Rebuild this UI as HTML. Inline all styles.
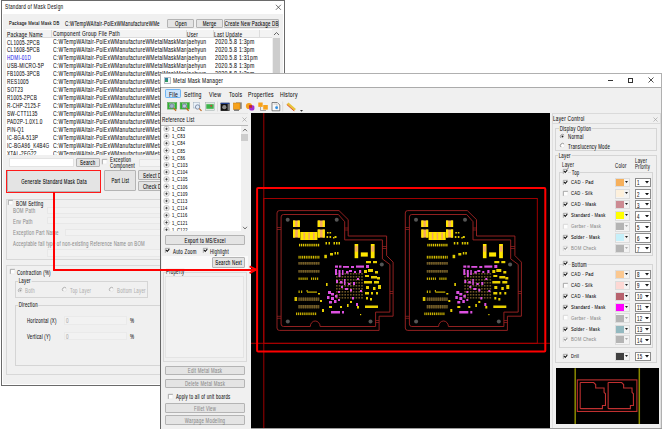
<!DOCTYPE html><html><head><meta charset="utf-8"><style>
html,body{margin:0;padding:0;}
body{width:662px;height:429px;overflow:hidden;position:relative;background:#fff;font-family:"Liberation Sans",sans-serif;}
.t{position:absolute;white-space:nowrap;line-height:1.117;-webkit-text-stroke:0.07px currentColor;}
.r{position:absolute;}
</style></head><body>
<div class="r" style="left:1px;top:0px;width:284px;height:386px;background:#fff;border:1px solid #6a6a6a;box-sizing:border-box;"></div>
<div class="r" style="left:3px;top:14px;width:280px;height:370px;background:#f0f0f0;"></div>
<div class="t" style="left:5.1px;top:3.42px;font-size:6.86px;color:#1a1a1a;letter-spacing:0.35px;transform:scaleX(0.686);transform-origin:0 0;">Standard of Mask Design</div>
<svg class="r" style="left:274px;top:2.5px" width="9" height="9" viewBox="0 0 9 9"><path d="M1.9 1.8 L6.9 6.8 M6.9 1.8 L1.9 6.8" stroke="#333" stroke-width="0.7"/></svg>
<div class="t" style="left:8.5px;top:20.20px;font-size:5.87px;color:#000;letter-spacing:0.3px;transform:scaleX(0.717);transform-origin:0 0;">Package Metal Mask DB</div>
<div class="t" style="left:64.5px;top:19.85px;font-size:6.47px;color:#000;letter-spacing:0.35px;transform:scaleX(0.690);transform-origin:0 0;">C:WTempWAltair-PolExWManufactureWMe</div>
<div class="r" style="left:166.5px;top:19.3px;width:27.900000000000006px;height:8.399999999999999px;background:#e4e4e4;border:1px solid #b4b4b4;border-radius:1px;box-sizing:border-box;"></div>
<div class="t" style="left:166.5px;top:20.39px;font-size:6.40px;color:#000;letter-spacing:0.35px;transform:scaleX(0.695);transform-origin:0 0;width:40.12px;text-align:center;">Open</div>
<div class="r" style="left:196px;top:19.3px;width:27px;height:8.399999999999999px;background:#e4e4e4;border:1px solid #b4b4b4;border-radius:1px;box-sizing:border-box;"></div>
<div class="t" style="left:196px;top:20.39px;font-size:6.40px;color:#000;letter-spacing:0.35px;transform:scaleX(0.691);transform-origin:0 0;width:39.08px;text-align:center;">Merge</div>
<div class="r" style="left:224px;top:19.3px;width:55.39999999999998px;height:8.399999999999999px;background:#e4e4e4;border:1px solid #b4b4b4;border-radius:1px;box-sizing:border-box;"></div>
<div class="t" style="left:224px;top:20.39px;font-size:6.40px;color:#000;letter-spacing:0.35px;transform:scaleX(0.687);transform-origin:0 0;width:80.68px;text-align:center;">Create New Package DB</div>
<div class="r" style="left:6px;top:29px;width:266px;height:126px;background:#fff;"></div>
<div class="r" style="left:6px;top:29.5px;width:266px;height:8.3px;background:#f3f3f3;border-bottom:1px solid #dcdcdc;box-sizing:border-box;"></div>
<div class="r" style="left:51px;top:30px;width:0.8px;height:7.5px;background:#dcdcdc;"></div>
<div class="r" style="left:186px;top:30px;width:0.8px;height:7.5px;background:#dcdcdc;"></div>
<div class="r" style="left:213px;top:30px;width:0.8px;height:7.5px;background:#dcdcdc;"></div>
<div class="r" style="left:258.5px;top:30px;width:0.8px;height:7.5px;background:#dcdcdc;"></div>
<div class="t" style="left:7px;top:30.68px;font-size:6.93px;color:#111;letter-spacing:0.35px;transform:scaleX(0.696);transform-origin:0 0;">Package Name</div>
<div class="t" style="left:52.5px;top:30.58px;font-size:7.10px;color:#111;letter-spacing:0.35px;transform:scaleX(0.689);transform-origin:0 0;">Component Group File Path</div>
<div class="t" style="left:187px;top:30.68px;font-size:6.93px;color:#111;letter-spacing:0.35px;transform:scaleX(0.691);transform-origin:0 0;">User</div>
<div class="t" style="left:214px;top:30.68px;font-size:6.93px;color:#111;letter-spacing:0.35px;transform:scaleX(0.687);transform-origin:0 0;">Last Update</div>
<div class="r" style="left:272px;top:29px;width:9px;height:126px;background:#f0f0f0;"></div>
<div class="r" style="left:273px;top:38px;width:6.5px;height:117px;background:#cdcdcd;"></div>
<svg class="r" style="left:273px;top:31px" width="7" height="5" viewBox="0 0 7 5"><path d="M1 4 L3.5 1.5 L6 4" stroke="#555" stroke-width="0.9" fill="none"/></svg>
<div class="r" style="left:6px;top:38px;width:266px;height:117px;overflow:hidden;">
<div class="t" style="left:1px;top:0.50px;font-size:6.73px;color:#111;letter-spacing:0.35px;transform:scaleX(0.696);transform-origin:0 0;">CL1005-2PCB</div>
<div class="t" style="left:46.7px;top:0.25px;font-size:7.15px;color:#111;letter-spacing:0.35px;transform:scaleX(0.696);transform-origin:0 0;width:191.90px;overflow:hidden;">C:WTempWAltair-PolExWManufactureWMetalMaskMan</div>
<div class="t" style="left:181.2px;top:0.19px;font-size:7.26px;color:#111;letter-spacing:0.35px;transform:scaleX(0.691);transform-origin:0 0;">jaehyun</div>
<div class="t" style="left:208.5px;top:0.04px;font-size:7.52px;color:#111;letter-spacing:0.35px;transform:scaleX(0.693);transform-origin:0 0;width:64.24px;overflow:hidden;">2020.5.8 1:3pm</div>
<div class="t" style="left:1px;top:8.45px;font-size:6.73px;color:#111;letter-spacing:0.35px;transform:scaleX(0.696);transform-origin:0 0;">CL1608-5PCB</div>
<div class="t" style="left:46.7px;top:8.20px;font-size:7.15px;color:#111;letter-spacing:0.35px;transform:scaleX(0.696);transform-origin:0 0;width:191.90px;overflow:hidden;">C:WTempWAltair-PolExWManufactureWMetalMaskMan</div>
<div class="t" style="left:181.2px;top:8.14px;font-size:7.26px;color:#111;letter-spacing:0.35px;transform:scaleX(0.691);transform-origin:0 0;">jaehyun</div>
<div class="t" style="left:208.5px;top:7.99px;font-size:7.52px;color:#111;letter-spacing:0.35px;transform:scaleX(0.693);transform-origin:0 0;width:64.24px;overflow:hidden;">2020.5.8 1:3pm</div>
<div class="t" style="left:1px;top:16.40px;font-size:6.73px;color:#2a2ae8;letter-spacing:0.35px;transform:scaleX(0.696);transform-origin:0 0;">HDMI-01D</div>
<div class="t" style="left:46.7px;top:16.15px;font-size:7.15px;color:#111;letter-spacing:0.35px;transform:scaleX(0.696);transform-origin:0 0;width:191.90px;overflow:hidden;">C:WTempWAltair-PolExWManufactureWMetalMaskMan</div>
<div class="t" style="left:181.2px;top:16.09px;font-size:7.26px;color:#111;letter-spacing:0.35px;transform:scaleX(0.691);transform-origin:0 0;">jaehyun</div>
<div class="t" style="left:208.5px;top:15.94px;font-size:7.52px;color:#111;letter-spacing:0.35px;transform:scaleX(0.693);transform-origin:0 0;width:64.20px;overflow:hidden;">2020.5.8 1:31pm</div>
<div class="t" style="left:1px;top:24.35px;font-size:6.73px;color:#111;letter-spacing:0.35px;transform:scaleX(0.698);transform-origin:0 0;">USB-MICRO-5P</div>
<div class="t" style="left:46.7px;top:24.10px;font-size:7.15px;color:#111;letter-spacing:0.35px;transform:scaleX(0.696);transform-origin:0 0;width:191.90px;overflow:hidden;">C:WTempWAltair-PolExWManufactureWMetalMaskMan</div>
<div class="t" style="left:181.2px;top:24.04px;font-size:7.26px;color:#111;letter-spacing:0.35px;transform:scaleX(0.691);transform-origin:0 0;">jaehyun</div>
<div class="t" style="left:208.5px;top:23.89px;font-size:7.52px;color:#111;letter-spacing:0.35px;transform:scaleX(0.693);transform-origin:0 0;width:64.24px;overflow:hidden;">2020.5.8 1:3pm</div>
<div class="t" style="left:1px;top:32.30px;font-size:6.73px;color:#111;letter-spacing:0.35px;transform:scaleX(0.696);transform-origin:0 0;">FB1005-3PCB</div>
<div class="t" style="left:46.7px;top:32.05px;font-size:7.15px;color:#111;letter-spacing:0.35px;transform:scaleX(0.696);transform-origin:0 0;width:191.90px;overflow:hidden;">C:WTempWAltair-PolExWManufactureWMetalMaskMan</div>
<div class="t" style="left:181.2px;top:31.99px;font-size:7.26px;color:#111;letter-spacing:0.35px;transform:scaleX(0.691);transform-origin:0 0;">jaehyun</div>
<div class="t" style="left:208.5px;top:31.84px;font-size:7.52px;color:#111;letter-spacing:0.35px;transform:scaleX(0.693);transform-origin:0 0;width:64.24px;overflow:hidden;">2020.5.8 1:3pm</div>
<div class="t" style="left:1px;top:40.25px;font-size:6.73px;color:#111;letter-spacing:0.35px;transform:scaleX(0.698);transform-origin:0 0;">RES1005</div>
<div class="t" style="left:46.7px;top:40.00px;font-size:7.15px;color:#111;letter-spacing:0.35px;transform:scaleX(0.696);transform-origin:0 0;width:191.90px;overflow:hidden;">C:WTempWAltair-PolExWManufactureWMetalMaskMan</div>
<div class="t" style="left:181.2px;top:39.94px;font-size:7.26px;color:#111;letter-spacing:0.35px;transform:scaleX(0.691);transform-origin:0 0;">jaehyun</div>
<div class="t" style="left:208.5px;top:39.79px;font-size:7.52px;color:#111;letter-spacing:0.35px;transform:scaleX(0.693);transform-origin:0 0;width:64.24px;overflow:hidden;">2020.5.8 1:3pm</div>
<div class="t" style="left:1px;top:48.20px;font-size:6.73px;color:#111;letter-spacing:0.35px;transform:scaleX(0.700);transform-origin:0 0;">SOT23</div>
<div class="t" style="left:46.7px;top:47.95px;font-size:7.15px;color:#111;letter-spacing:0.35px;transform:scaleX(0.696);transform-origin:0 0;width:191.90px;overflow:hidden;">C:WTempWAltair-PolExWManufactureWMetalMaskMan</div>
<div class="t" style="left:181.2px;top:47.89px;font-size:7.26px;color:#111;letter-spacing:0.35px;transform:scaleX(0.691);transform-origin:0 0;">jaehyun</div>
<div class="t" style="left:208.5px;top:47.74px;font-size:7.52px;color:#111;letter-spacing:0.35px;transform:scaleX(0.693);transform-origin:0 0;width:64.24px;overflow:hidden;">2020.5.8 1:3pm</div>
<div class="t" style="left:1px;top:56.15px;font-size:6.73px;color:#111;letter-spacing:0.35px;transform:scaleX(0.696);transform-origin:0 0;">R1005-2PCB</div>
<div class="t" style="left:46.7px;top:55.90px;font-size:7.15px;color:#111;letter-spacing:0.35px;transform:scaleX(0.696);transform-origin:0 0;width:191.90px;overflow:hidden;">C:WTempWAltair-PolExWManufactureWMetalMaskMan</div>
<div class="t" style="left:181.2px;top:55.84px;font-size:7.26px;color:#111;letter-spacing:0.35px;transform:scaleX(0.691);transform-origin:0 0;">jaehyun</div>
<div class="t" style="left:208.5px;top:55.69px;font-size:7.52px;color:#111;letter-spacing:0.35px;transform:scaleX(0.693);transform-origin:0 0;width:64.24px;overflow:hidden;">2020.5.8 1:3pm</div>
<div class="t" style="left:1px;top:64.10px;font-size:6.73px;color:#111;letter-spacing:0.35px;transform:scaleX(0.693);transform-origin:0 0;">R-CHP-2125-F</div>
<div class="t" style="left:46.7px;top:63.85px;font-size:7.15px;color:#111;letter-spacing:0.35px;transform:scaleX(0.696);transform-origin:0 0;width:191.90px;overflow:hidden;">C:WTempWAltair-PolExWManufactureWMetalMaskMan</div>
<div class="t" style="left:181.2px;top:63.79px;font-size:7.26px;color:#111;letter-spacing:0.35px;transform:scaleX(0.691);transform-origin:0 0;">jaehyun</div>
<div class="t" style="left:208.5px;top:63.64px;font-size:7.52px;color:#111;letter-spacing:0.35px;transform:scaleX(0.693);transform-origin:0 0;width:64.24px;overflow:hidden;">2020.5.8 1:3pm</div>
<div class="t" style="left:1px;top:72.05px;font-size:6.73px;color:#111;letter-spacing:0.35px;transform:scaleX(0.697);transform-origin:0 0;">SW-CTT1135</div>
<div class="t" style="left:46.7px;top:71.80px;font-size:7.15px;color:#111;letter-spacing:0.35px;transform:scaleX(0.696);transform-origin:0 0;width:191.90px;overflow:hidden;">C:WTempWAltair-PolExWManufactureWMetalMaskMan</div>
<div class="t" style="left:181.2px;top:71.74px;font-size:7.26px;color:#111;letter-spacing:0.35px;transform:scaleX(0.691);transform-origin:0 0;">jaehyun</div>
<div class="t" style="left:208.5px;top:71.59px;font-size:7.52px;color:#111;letter-spacing:0.35px;transform:scaleX(0.693);transform-origin:0 0;width:64.24px;overflow:hidden;">2020.5.8 1:3pm</div>
<div class="t" style="left:1px;top:80.00px;font-size:6.73px;color:#111;letter-spacing:0.35px;transform:scaleX(0.691);transform-origin:0 0;">PAD2P-1.0X1.0</div>
<div class="t" style="left:46.7px;top:79.75px;font-size:7.15px;color:#111;letter-spacing:0.35px;transform:scaleX(0.696);transform-origin:0 0;width:191.90px;overflow:hidden;">C:WTempWAltair-PolExWManufactureWMetalMaskMan</div>
<div class="t" style="left:181.2px;top:79.69px;font-size:7.26px;color:#111;letter-spacing:0.35px;transform:scaleX(0.691);transform-origin:0 0;">jaehyun</div>
<div class="t" style="left:208.5px;top:79.54px;font-size:7.52px;color:#111;letter-spacing:0.35px;transform:scaleX(0.693);transform-origin:0 0;width:64.24px;overflow:hidden;">2020.5.8 1:3pm</div>
<div class="t" style="left:1px;top:87.95px;font-size:6.73px;color:#111;letter-spacing:0.35px;transform:scaleX(0.693);transform-origin:0 0;">PIN-Q1</div>
<div class="t" style="left:46.7px;top:87.70px;font-size:7.15px;color:#111;letter-spacing:0.35px;transform:scaleX(0.696);transform-origin:0 0;width:191.90px;overflow:hidden;">C:WTempWAltair-PolExWManufactureWMetalMaskMan</div>
<div class="t" style="left:181.2px;top:87.64px;font-size:7.26px;color:#111;letter-spacing:0.35px;transform:scaleX(0.691);transform-origin:0 0;">jaehyun</div>
<div class="t" style="left:208.5px;top:87.49px;font-size:7.52px;color:#111;letter-spacing:0.35px;transform:scaleX(0.693);transform-origin:0 0;width:64.24px;overflow:hidden;">2020.5.8 1:3pm</div>
<div class="t" style="left:1px;top:95.90px;font-size:6.73px;color:#111;letter-spacing:0.35px;transform:scaleX(0.693);transform-origin:0 0;">IC-BGA-513P</div>
<div class="t" style="left:46.7px;top:95.65px;font-size:7.15px;color:#111;letter-spacing:0.35px;transform:scaleX(0.696);transform-origin:0 0;width:191.90px;overflow:hidden;">C:WTempWAltair-PolExWManufactureWMetalMaskMan</div>
<div class="t" style="left:181.2px;top:95.59px;font-size:7.26px;color:#111;letter-spacing:0.35px;transform:scaleX(0.691);transform-origin:0 0;">jaehyun</div>
<div class="t" style="left:208.5px;top:95.44px;font-size:7.52px;color:#111;letter-spacing:0.35px;transform:scaleX(0.693);transform-origin:0 0;width:64.24px;overflow:hidden;">2020.5.8 1:3pm</div>
<div class="t" style="left:1px;top:103.85px;font-size:6.73px;color:#111;letter-spacing:0.35px;transform:scaleX(0.697);transform-origin:0 0;">IC-BGA96_K4B4G</div>
<div class="t" style="left:46.7px;top:103.60px;font-size:7.15px;color:#111;letter-spacing:0.35px;transform:scaleX(0.696);transform-origin:0 0;width:191.90px;overflow:hidden;">C:WTempWAltair-PolExWManufactureWMetalMaskMan</div>
<div class="t" style="left:181.2px;top:103.54px;font-size:7.26px;color:#111;letter-spacing:0.35px;transform:scaleX(0.691);transform-origin:0 0;">jaehyun</div>
<div class="t" style="left:208.5px;top:103.39px;font-size:7.52px;color:#111;letter-spacing:0.35px;transform:scaleX(0.693);transform-origin:0 0;width:64.24px;overflow:hidden;">2020.5.8 1:3pm</div>
<div class="t" style="left:1px;top:111.80px;font-size:6.73px;color:#111;letter-spacing:0.35px;transform:scaleX(0.695);transform-origin:0 0;">XTAL-2FG22</div>
<div class="t" style="left:46.7px;top:111.55px;font-size:7.15px;color:#111;letter-spacing:0.35px;transform:scaleX(0.696);transform-origin:0 0;width:191.90px;overflow:hidden;">C:WTempWAltair-PolExWManufactureWMetalMaskMan</div>
<div class="t" style="left:181.2px;top:111.49px;font-size:7.26px;color:#111;letter-spacing:0.35px;transform:scaleX(0.691);transform-origin:0 0;">jaehyun</div>
<div class="t" style="left:208.5px;top:111.34px;font-size:7.52px;color:#111;letter-spacing:0.35px;transform:scaleX(0.693);transform-origin:0 0;width:64.24px;overflow:hidden;">2020.5.8 1:3pm</div>
</div>
<div class="r" style="left:9px;top:158px;width:65px;height:9px;background:#fff;border:1px solid #e3e3e3;box-sizing:border-box;"></div>
<div class="r" style="left:76px;top:158px;width:23.5px;height:8.5px;background:#e4e4e4;border:1px solid #b4b4b4;border-radius:1px;box-sizing:border-box;"></div>
<div class="t" style="left:76px;top:159.14px;font-size:6.40px;color:#000;letter-spacing:0.35px;transform:scaleX(0.687);transform-origin:0 0;width:34.23px;text-align:center;">Search</div>
<svg class="r" style="left:102px;top:159.35px;overflow:visible" width="5.3" height="5.3" viewBox="0 0 5.3 5.3"><rect x="0" y="0" width="5.3" height="5.3" fill="#fdfdfd"/><path d="M0.35 5.3 V0.35 H5.3" fill="none" stroke="#858585" stroke-width="0.7"/><path d="M5.05 0.5 V5.05 H0.5" fill="none" stroke="#e2e2e2" stroke-width="0.5"/></svg>
<div class="t" style="left:110px;top:156.19px;font-size:6.40px;color:#111;letter-spacing:0.35px;transform:scaleX(0.681);transform-origin:0 0;">Exception</div>
<div class="t" style="left:110px;top:162.09px;font-size:6.40px;color:#111;letter-spacing:0.35px;transform:scaleX(0.692);transform-origin:0 0;">Component</div>
<div class="r" style="left:139px;top:158.5px;width:22px;height:8.5px;background:#f4f4f4;border:1px solid #e3e3e3;box-sizing:border-box;"></div>
<div class="r" style="left:6.5px;top:170px;width:94.0px;height:22px;background:#e4e4e4;border:1px solid #b4b4b4;border-radius:1px;box-sizing:border-box;"></div>
<div class="t" style="left:6.5px;top:177.89px;font-size:6.40px;color:#000;letter-spacing:0.35px;transform:scaleX(0.683);transform-origin:0 0;width:137.58px;text-align:center;">Generate Standard Mask Data</div>
<div class="r" style="left:6px;top:169.5px;width:95px;height:23px;border:1.3px solid #ff1a1a;box-sizing:border-box;"></div>
<div class="r" style="left:103.5px;top:169.5px;width:32.69999999999999px;height:21.80000000000001px;background:#e4e4e4;border:1px solid #b4b4b4;border-radius:1px;box-sizing:border-box;"></div>
<div class="t" style="left:103.5px;top:177.29px;font-size:6.40px;color:#000;letter-spacing:0.35px;transform:scaleX(0.668);transform-origin:0 0;width:48.95px;text-align:center;">Part List</div>
<div class="r" style="left:138.4px;top:169.5px;width:31.599999999999994px;height:10.800000000000011px;background:#e4e4e4;border:1px solid #b4b4b4;border-radius:1px;box-sizing:border-box;"></div>
<div class="t" style="left:138.4px;top:171.79px;font-size:6.40px;color:#000;letter-spacing:0.35px;transform:scaleX(0.682);transform-origin:0 0;width:46.33px;text-align:center;">Select DB</div>
<div class="r" style="left:138.4px;top:181px;width:31.599999999999994px;height:10.300000000000011px;background:#e4e4e4;border:1px solid #b4b4b4;border-radius:1px;box-sizing:border-box;"></div>
<div class="t" style="left:138.4px;top:183.04px;font-size:6.40px;color:#000;letter-spacing:0.35px;transform:scaleX(0.690);transform-origin:0 0;width:45.76px;text-align:center;">Check DB</div>
<div class="r" style="left:5.5px;top:198.5px;width:160px;height:61px;border:1px solid #d8d8d8;box-sizing:border-box;"></div>
<svg class="r" style="left:8.4px;top:200.10px;overflow:visible" width="5" height="5" viewBox="0 0 5 5"><rect x="0" y="0" width="5" height="5" fill="#fdfdfd"/><path d="M0.35 5 V0.35 H5" fill="none" stroke="#858585" stroke-width="0.7"/><path d="M4.75 0.5 V4.75 H0.5" fill="none" stroke="#e2e2e2" stroke-width="0.5"/></svg>
<div class="t" style="left:16px;top:199.89px;font-size:6.40px;color:#111;letter-spacing:0.35px;transform:scaleX(0.685);transform-origin:0 0;">BOM Setting</div>
<div class="t" style="left:13px;top:207.19px;font-size:6.40px;color:#8c8c8c;letter-spacing:0.35px;transform:scaleX(0.692);transform-origin:0 0;">BOM Path</div>
<div class="r" style="left:46.6px;top:207px;width:120px;height:6.8px;background:#f2f2f2;border:1px solid #e8e8e8;box-sizing:border-box;"></div>
<div class="t" style="left:13px;top:217.69px;font-size:6.40px;color:#8c8c8c;letter-spacing:0.35px;transform:scaleX(0.684);transform-origin:0 0;">Env Path</div>
<div class="r" style="left:46.6px;top:217.4px;width:120px;height:7px;background:#f2f2f2;border:1px solid #e8e8e8;box-sizing:border-box;"></div>
<div class="t" style="left:13px;top:228.89px;font-size:6.40px;color:#8c8c8c;letter-spacing:0.35px;transform:scaleX(0.683);transform-origin:0 0;">Exception Part Name</div>
<div class="r" style="left:65px;top:228.7px;width:100px;height:7px;background:#f2f2f2;border:1px solid #e8e8e8;box-sizing:border-box;"></div>
<div class="t" style="left:13px;top:239.89px;font-size:6.40px;color:#8c8c8c;letter-spacing:0.35px;transform:scaleX(0.679);transform-origin:0 0;">Acceptable fail type of non-existing Reference Name on BOM</div>
<div class="r" style="left:46.6px;top:249.4px;width:120px;height:7.2px;background:#f2f2f2;border:1px solid #e8e8e8;box-sizing:border-box;"></div>
<div class="r" style="left:5.5px;top:265px;width:160px;height:110px;border:1px solid #d8d8d8;box-sizing:border-box;"></div>
<svg class="r" style="left:9.5px;top:269.10px;overflow:visible" width="5" height="5" viewBox="0 0 5 5"><rect x="0" y="0" width="5" height="5" fill="#fdfdfd"/><path d="M0.35 5 V0.35 H5" fill="none" stroke="#858585" stroke-width="0.7"/><path d="M4.75 0.5 V4.75 H0.5" fill="none" stroke="#e2e2e2" stroke-width="0.5"/></svg>
<div class="t" style="left:17px;top:269.19px;font-size:6.40px;color:#111;letter-spacing:0.35px;transform:scaleX(0.678);transform-origin:0 0;">Contraction (%)</div>
<div class="r" style="left:14.5px;top:280.5px;width:133.5px;height:17.5px;border:1px solid #d5d5d5;box-sizing:border-box;"></div>
<div class="t" style="left:17.5px;top:277.39px;font-size:6.40px;color:#111;letter-spacing:0.35px;transform:scaleX(0.683);transform-origin:0 0;"><span style="background:#f0f0f0;padding:0 1px">Layer</span></div>
<svg class="r" style="left:17.5px;top:287.50px;overflow:visible" width="5" height="5" viewBox="0 0 5 5"><circle cx="2.5" cy="2.5" r="2.15" fill="#f4f4f4" stroke="#dedede" stroke-width="0.5"/><path d="M0.98 4.02 A2.15 2.15 0 0 1 4.02 0.98" fill="none" stroke="#a0a0a0" stroke-width="0.75"/><circle cx="2.5" cy="2.5" r="1.0" fill="#9a9a9a"/></svg>
<div class="t" style="left:24.5px;top:286.89px;font-size:6.40px;color:#b0b0b0;letter-spacing:0.35px;transform:scaleX(0.685);transform-origin:0 0;">Both</div>
<svg class="r" style="left:61.5px;top:287.00px;overflow:visible" width="5" height="5" viewBox="0 0 5 5"><circle cx="2.5" cy="2.5" r="2.15" fill="#f4f4f4" stroke="#dedede" stroke-width="0.5"/><path d="M0.98 4.02 A2.15 2.15 0 0 1 4.02 0.98" fill="none" stroke="#a0a0a0" stroke-width="0.75"/></svg>
<div class="t" style="left:70px;top:286.89px;font-size:6.40px;color:#b0b0b0;letter-spacing:0.35px;transform:scaleX(0.681);transform-origin:0 0;">Top Layer</div>
<svg class="r" style="left:108.5px;top:287.00px;overflow:visible" width="5" height="5" viewBox="0 0 5 5"><circle cx="2.5" cy="2.5" r="2.15" fill="#f4f4f4" stroke="#dedede" stroke-width="0.5"/><path d="M0.98 4.02 A2.15 2.15 0 0 1 4.02 0.98" fill="none" stroke="#a0a0a0" stroke-width="0.75"/></svg>
<div class="t" style="left:116.5px;top:286.89px;font-size:6.40px;color:#b0b0b0;letter-spacing:0.35px;transform:scaleX(0.682);transform-origin:0 0;">Bottom Layer</div>
<div class="r" style="left:14.5px;top:304.5px;width:150.5px;height:61.5px;border:1px solid #d5d5d5;box-sizing:border-box;"></div>
<div class="t" style="left:17.5px;top:301.39px;font-size:6.40px;color:#111;letter-spacing:0.35px;transform:scaleX(0.674);transform-origin:0 0;"><span style="background:#f0f0f0;padding:0 1px">Direction</span></div>
<div class="t" style="left:27px;top:317.19px;font-size:6.40px;color:#111;letter-spacing:0.35px;transform:scaleX(0.673);transform-origin:0 0;">Horizontal (X)</div>
<div class="r" style="left:63.5px;top:316px;width:63px;height:8.5px;background:#f2f2f2;border:1px solid #eaeaea;box-sizing:border-box;"></div>
<div class="t" style="left:65.5px;top:316.97px;font-size:6.60px;color:#aaa;letter-spacing:0.35px;transform:scaleX(0.692);transform-origin:0 0;">0</div>
<div class="t" style="left:129.5px;top:317.19px;font-size:6.40px;color:#111;letter-spacing:0.35px;transform:scaleX(0.714);transform-origin:0 0;">%</div>
<div class="t" style="left:27px;top:332.89px;font-size:6.40px;color:#111;letter-spacing:0.35px;transform:scaleX(0.668);transform-origin:0 0;">Vertical (Y)</div>
<div class="r" style="left:63.5px;top:331.5px;width:63px;height:8.5px;background:#f2f2f2;border:1px solid #eaeaea;box-sizing:border-box;"></div>
<div class="t" style="left:65.5px;top:332.57px;font-size:6.60px;color:#aaa;letter-spacing:0.35px;transform:scaleX(0.692);transform-origin:0 0;">0</div>
<div class="t" style="left:129.5px;top:332.89px;font-size:6.40px;color:#111;letter-spacing:0.35px;transform:scaleX(0.714);transform-origin:0 0;">%</div>
<div class="r" style="left:160px;top:73px;width:502px;height:360px;background:#f0f0f0;border:1px solid #b0b0b0;box-sizing:border-box;"></div>
<div class="r" style="left:161px;top:74px;width:500px;height:13.5px;background:#fff;"></div>
<div class="r" style="left:161px;top:87.3px;width:500px;height:1.1px;background:#ababab;"></div>
<div class="r" style="left:160px;top:87.3px;width:1.4px;height:342px;background:#666;"></div>
<div class="r" style="left:164.2px;top:77px;width:7px;height:6.5px;background:#f4f6f8;border:0.6px solid #b8c0c8;box-sizing:border-box;"></div>
<div class="r" style="left:165.2px;top:78.2px;width:2.6px;height:4.2px;background:linear-gradient(#2a7ab0,#30a050);"></div>
<div class="t" style="left:173.2px;top:77.50px;font-size:7.08px;color:#111;letter-spacing:0.35px;transform:scaleX(0.692);transform-origin:0 0;">Metal Mask Manager</div>
<div class="r" style="left:607.5px;top:80px;width:5.2px;height:0.6px;background:#333;"></div>
<div class="r" style="left:627.8px;top:77.8px;width:4.8px;height:4.8px;border:0.6px solid #333;box-sizing:border-box;"></div>
<svg class="r" style="left:648px;top:77px" width="6" height="6" viewBox="0 0 6 6"><path d="M0.5 0.5 L5.5 5.5 M5.5 0.5 L0.5 5.5" stroke="#222" stroke-width="0.8"/></svg>
<div class="r" style="left:165.2px;top:89.2px;width:15.6px;height:9px;background:#cce4fb;border:0.9px solid #6fb4f2;border-radius:1.2px;box-sizing:border-box;"></div>
<div class="t" style="left:169px;top:90.84px;font-size:7.52px;color:#111;letter-spacing:0.35px;transform:scaleX(0.679);transform-origin:0 0;">File</div>
<div class="t" style="left:184.3px;top:90.84px;font-size:7.52px;color:#111;letter-spacing:0.35px;transform:scaleX(0.686);transform-origin:0 0;">Setting</div>
<div class="t" style="left:208.8px;top:90.84px;font-size:7.52px;color:#111;letter-spacing:0.35px;transform:scaleX(0.697);transform-origin:0 0;">View</div>
<div class="t" style="left:228.7px;top:90.84px;font-size:7.52px;color:#111;letter-spacing:0.35px;transform:scaleX(0.689);transform-origin:0 0;">Tools</div>
<div class="t" style="left:248.4px;top:90.84px;font-size:7.52px;color:#111;letter-spacing:0.35px;transform:scaleX(0.687);transform-origin:0 0;">Properties</div>
<div class="t" style="left:280.2px;top:90.84px;font-size:7.52px;color:#111;letter-spacing:0.35px;transform:scaleX(0.686);transform-origin:0 0;">History</div>
<svg class="r" style="left:160px;top:99px" width="146" height="14" viewBox="160 99 146 14">
<g id="zi">
<rect x="167.5" y="102.5" width="9.3" height="6.6" fill="#2fb52f" stroke="#5a9a5a" stroke-width="0.5"/>
<rect x="169.5" y="103.5" width="5" height="4.6" fill="#d9e6ee"/>
<circle cx="171.8" cy="106" r="2.3" fill="#9fb4c8" stroke="#556070" stroke-width="0.6"/>
<path d="M173.6 107.8 L176 110.8" stroke="#c06a20" stroke-width="1.3"/>
</g>
<g transform="translate(12.6,0)">
<rect x="167.5" y="102.5" width="9.3" height="6.6" fill="#2fb52f" stroke="#5a9a5a" stroke-width="0.5"/>
<rect x="169.5" y="103.5" width="5" height="4.6" fill="#d9e6ee"/>
<circle cx="171.8" cy="106" r="2.3" fill="#9fb4c8" stroke="#556070" stroke-width="0.6"/>
<path d="M170.6 106 H173" stroke="#fff" stroke-width="0.7"/>
<path d="M173.6 107.8 L176 110.8" stroke="#c06a20" stroke-width="1.3"/>
</g>
<rect x="193.5" y="102.5" width="6" height="5.5" fill="#e8f0f8" stroke="#9ab" stroke-width="0.5"/>
<circle cx="197.6" cy="107" r="2.2" fill="#dfeaf7" stroke="#4a5a7a" stroke-width="0.6"/>
<path d="M199.3 108.6 L201.5 110.8" stroke="#c06a20" stroke-width="1.2"/>
<rect x="205.6" y="102.6" width="8.8" height="7.8" fill="#e0e8e0" stroke="#9aa" stroke-width="0.5"/>
<rect x="206.3" y="104.2" width="7.4" height="4.6" fill="#3db34a"/>
<rect x="210.5" y="105" width="1.5" height="1.5" fill="#d33"/>
<rect x="217.3" y="101.5" width="0.6" height="10" fill="#cfcfcf"/>
<rect x="220.6" y="102.8" width="8.9" height="8.1" fill="#111"/>
<rect x="220.6" y="102.8" width="8.9" height="1" fill="#2a4fb0"/>
<circle cx="224.3" cy="107.2" r="2.1" fill="#8a8a8a"/>
<rect x="227.6" y="104" width="1.5" height="6.5" fill="#777"/>
<rect x="236" y="102.4" width="5.8" height="6.5" fill="#8a8a8a"/>
<rect x="233.4" y="103" width="6.6" height="6.6" fill="#f7a21b" stroke="#c87800" stroke-width="0.5"/>
<rect x="234" y="109.6" width="5" height="1.2" fill="#666"/>
<circle cx="249" cy="106" r="3.1" fill="#f5a020"/>
<rect x="249.2" y="105.2" width="5.2" height="5.2" rx="1.6" fill="#a030d0"/>
<rect x="249.2" y="105.2" width="2.8" height="2.6" fill="#c02828"/>
<rect x="258.3" y="102.5" width="4.4" height="4.4" fill="#f7a21b"/>
<rect x="263.2" y="105" width="4.6" height="4.6" fill="#f7a21b"/>
<path d="M260.5 107 V110.5 H266" stroke="#777" stroke-width="0.6" fill="none"/>
<path d="M272 102.5 H277.3 L279.8 105 V110.8 H272 Z" fill="#fafafa" stroke="#555" stroke-width="0.7"/>
<path d="M273.5 104 H277 V109.5" fill="none" stroke="#999" stroke-width="0.5"/>
<circle cx="276.6" cy="107.7" r="1.4" fill="#2a8ee6"/>
<rect x="282.5" y="101.5" width="0.6" height="10" fill="#cfcfcf"/>
<path d="M287.5 103.5 L295 110" stroke="#e8c23a" stroke-width="2.8"/>
<path d="M286.8 104.6 L294.2 111" stroke="#d22" stroke-width="0.7"/>
<path d="M300 110 H303 L301.5 111.8Z" fill="#333"/>
</svg>
<div class="r" style="left:161px;top:113px;width:88px;height:12.5px;background:#f0f0f0;border-top:1px solid #e3e3e3;border-bottom:1px solid #b8b8b8;border-right:1px solid #e0e0e0;box-sizing:border-box;"></div>
<div class="t" style="left:162.3px;top:115.93px;font-size:6.67px;color:#111;letter-spacing:0.35px;transform:scaleX(0.680);transform-origin:0 0;">Reference List</div>
<svg class="r" style="left:241.5px;top:116.5px" width="5" height="5" viewBox="0 0 5 5"><path d="M0.5 0.5 L4.5 4.5 M4.5 0.5 L0.5 4.5" stroke="#999" stroke-width="0.6"/></svg>
<div class="r" style="left:162px;top:126px;width:86px;height:105px;background:#fff;"></div>
<div class="r" style="left:162px;top:126px;width:79px;height:105px;overflow:hidden;">
<svg class="r" style="left:0;top:0" width="79" height="105" viewBox="0 0 79 105"><rect x="2" y="0.40" width="5" height="5" rx="1.6" fill="#f0f0f0" stroke="#b4b4b4" stroke-width="0.7"/><path d="M3.3 2.90 H5.7 M4.5 1.70 V4.10" stroke="#333" stroke-width="0.8"/><path d="M7.2 2.90 H8.5" stroke="#ccc" stroke-width="0.5"/><rect x="2" y="7.60" width="5" height="5" rx="1.6" fill="#f0f0f0" stroke="#b4b4b4" stroke-width="0.7"/><path d="M3.3 10.10 H5.7 M4.5 8.90 V11.30" stroke="#333" stroke-width="0.8"/><path d="M7.2 10.10 H8.5" stroke="#ccc" stroke-width="0.5"/><rect x="2" y="14.80" width="5" height="5" rx="1.6" fill="#f0f0f0" stroke="#b4b4b4" stroke-width="0.7"/><path d="M3.3 17.30 H5.7 M4.5 16.10 V18.50" stroke="#333" stroke-width="0.8"/><path d="M7.2 17.30 H8.5" stroke="#ccc" stroke-width="0.5"/><rect x="2" y="22.00" width="5" height="5" rx="1.6" fill="#f0f0f0" stroke="#b4b4b4" stroke-width="0.7"/><path d="M3.3 24.50 H5.7 M4.5 23.30 V25.70" stroke="#333" stroke-width="0.8"/><path d="M7.2 24.50 H8.5" stroke="#ccc" stroke-width="0.5"/><rect x="2" y="29.20" width="5" height="5" rx="1.6" fill="#f0f0f0" stroke="#b4b4b4" stroke-width="0.7"/><path d="M3.3 31.70 H5.7 M4.5 30.50 V32.90" stroke="#333" stroke-width="0.8"/><path d="M7.2 31.70 H8.5" stroke="#ccc" stroke-width="0.5"/><rect x="2" y="36.40" width="5" height="5" rx="1.6" fill="#f0f0f0" stroke="#b4b4b4" stroke-width="0.7"/><path d="M3.3 38.90 H5.7 M4.5 37.70 V40.10" stroke="#333" stroke-width="0.8"/><path d="M7.2 38.90 H8.5" stroke="#ccc" stroke-width="0.5"/><rect x="2" y="43.60" width="5" height="5" rx="1.6" fill="#f0f0f0" stroke="#b4b4b4" stroke-width="0.7"/><path d="M3.3 46.10 H5.7 M4.5 44.90 V47.30" stroke="#333" stroke-width="0.8"/><path d="M7.2 46.10 H8.5" stroke="#ccc" stroke-width="0.5"/><rect x="2" y="50.80" width="5" height="5" rx="1.6" fill="#f0f0f0" stroke="#b4b4b4" stroke-width="0.7"/><path d="M3.3 53.30 H5.7 M4.5 52.10 V54.50" stroke="#333" stroke-width="0.8"/><path d="M7.2 53.30 H8.5" stroke="#ccc" stroke-width="0.5"/><rect x="2" y="58.00" width="5" height="5" rx="1.6" fill="#f0f0f0" stroke="#b4b4b4" stroke-width="0.7"/><path d="M3.3 60.50 H5.7 M4.5 59.30 V61.70" stroke="#333" stroke-width="0.8"/><path d="M7.2 60.50 H8.5" stroke="#ccc" stroke-width="0.5"/><rect x="2" y="65.20" width="5" height="5" rx="1.6" fill="#f0f0f0" stroke="#b4b4b4" stroke-width="0.7"/><path d="M3.3 67.70 H5.7 M4.5 66.50 V68.90" stroke="#333" stroke-width="0.8"/><path d="M7.2 67.70 H8.5" stroke="#ccc" stroke-width="0.5"/><rect x="2" y="72.40" width="5" height="5" rx="1.6" fill="#f0f0f0" stroke="#b4b4b4" stroke-width="0.7"/><path d="M3.3 74.90 H5.7 M4.5 73.70 V76.10" stroke="#333" stroke-width="0.8"/><path d="M7.2 74.90 H8.5" stroke="#ccc" stroke-width="0.5"/><rect x="2" y="79.60" width="5" height="5" rx="1.6" fill="#f0f0f0" stroke="#b4b4b4" stroke-width="0.7"/><path d="M3.3 82.10 H5.7 M4.5 80.90 V83.30" stroke="#333" stroke-width="0.8"/><path d="M7.2 82.10 H8.5" stroke="#ccc" stroke-width="0.5"/><rect x="2" y="86.80" width="5" height="5" rx="1.6" fill="#f0f0f0" stroke="#b4b4b4" stroke-width="0.7"/><path d="M3.3 89.30 H5.7 M4.5 88.10 V90.50" stroke="#333" stroke-width="0.8"/><path d="M7.2 89.30 H8.5" stroke="#ccc" stroke-width="0.5"/><rect x="2" y="94.00" width="5" height="5" rx="1.6" fill="#f0f0f0" stroke="#b4b4b4" stroke-width="0.7"/><path d="M3.3 96.50 H5.7 M4.5 95.30 V97.70" stroke="#333" stroke-width="0.8"/><path d="M7.2 96.50 H8.5" stroke="#ccc" stroke-width="0.5"/><rect x="2" y="101.20" width="5" height="5" rx="1.6" fill="#f0f0f0" stroke="#b4b4b4" stroke-width="0.7"/><path d="M3.3 103.70 H5.7 M4.5 102.50 V104.90" stroke="#333" stroke-width="0.8"/><path d="M7.2 103.70 H8.5" stroke="#ccc" stroke-width="0.5"/></svg>
<div class="t" style="left:10px;top:0.05px;font-size:5.94px;color:#111;letter-spacing:0.35px;transform:scaleX(0.689);transform-origin:0 0;">1_C82</div>
<div class="t" style="left:10px;top:7.25px;font-size:5.94px;color:#111;letter-spacing:0.35px;transform:scaleX(0.689);transform-origin:0 0;">1_C83</div>
<div class="t" style="left:10px;top:14.45px;font-size:5.94px;color:#111;letter-spacing:0.35px;transform:scaleX(0.689);transform-origin:0 0;">1_C84</div>
<div class="t" style="left:10px;top:21.65px;font-size:5.94px;color:#111;letter-spacing:0.35px;transform:scaleX(0.689);transform-origin:0 0;">1_C85</div>
<div class="t" style="left:10px;top:28.85px;font-size:5.94px;color:#111;letter-spacing:0.35px;transform:scaleX(0.689);transform-origin:0 0;">1_C86</div>
<div class="t" style="left:10px;top:36.05px;font-size:5.94px;color:#111;letter-spacing:0.35px;transform:scaleX(0.688);transform-origin:0 0;">1_C103</div>
<div class="t" style="left:10px;top:43.25px;font-size:5.94px;color:#111;letter-spacing:0.35px;transform:scaleX(0.688);transform-origin:0 0;">1_C104</div>
<div class="t" style="left:10px;top:50.45px;font-size:5.94px;color:#111;letter-spacing:0.35px;transform:scaleX(0.688);transform-origin:0 0;">1_C105</div>
<div class="t" style="left:10px;top:57.65px;font-size:5.94px;color:#111;letter-spacing:0.35px;transform:scaleX(0.688);transform-origin:0 0;">1_C106</div>
<div class="t" style="left:10px;top:64.85px;font-size:5.94px;color:#111;letter-spacing:0.35px;transform:scaleX(0.688);transform-origin:0 0;">1_C109</div>
<div class="t" style="left:10px;top:72.05px;font-size:5.94px;color:#111;letter-spacing:0.35px;transform:scaleX(0.687);transform-origin:0 0;">1_C113</div>
<div class="t" style="left:10px;top:79.25px;font-size:5.94px;color:#111;letter-spacing:0.35px;transform:scaleX(0.687);transform-origin:0 0;">1_C114</div>
<div class="t" style="left:10px;top:86.45px;font-size:5.94px;color:#111;letter-spacing:0.35px;transform:scaleX(0.687);transform-origin:0 0;">1_C116</div>
<div class="t" style="left:10px;top:93.65px;font-size:5.94px;color:#111;letter-spacing:0.35px;transform:scaleX(0.688);transform-origin:0 0;">1_C121</div>
<div class="t" style="left:10px;top:100.85px;font-size:5.94px;color:#111;letter-spacing:0.35px;transform:scaleX(0.688);transform-origin:0 0;">1_C122</div>
</div>
<div class="r" style="left:240.5px;top:126px;width:7.5px;height:105px;background:#f0f0f0;"></div>
<div class="r" style="left:241px;top:133.5px;width:6.5px;height:7.5px;background:#cdcdcd;"></div>
<svg class="r" style="left:241.5px;top:127.5px" width="6" height="4" viewBox="0 0 6 4"><path d="M1 3.2 L3 1 L5 3.2" stroke="#555" stroke-width="0.8" fill="none"/></svg>
<svg class="r" style="left:241.5px;top:225.5px" width="6" height="4" viewBox="0 0 6 4"><path d="M1 0.8 L3 3 L5 0.8" stroke="#555" stroke-width="0.8" fill="none"/></svg>
<div class="r" style="left:164.6px;top:235px;width:80.30000000000001px;height:9.849999999999994px;background:#e4e4e4;border:1px solid #b4b4b4;border-radius:1px;box-sizing:border-box;"></div>
<div class="t" style="left:164.6px;top:236.81px;font-size:6.40px;color:#000;letter-spacing:0.35px;transform:scaleX(0.679);transform-origin:0 0;width:118.26px;text-align:center;">Export to MS/Excel</div>
<svg class="r" style="left:165px;top:248.30px;overflow:visible" width="5" height="5" viewBox="0 0 5 5"><rect x="0" y="0" width="5" height="5" fill="#fdfdfd"/><path d="M0.35 5 V0.35 H5" fill="none" stroke="#858585" stroke-width="0.7"/><path d="M4.75 0.5 V4.75 H0.5" fill="none" stroke="#e2e2e2" stroke-width="0.5"/><path d="M1.00 1.90 L2.25 3.40 L4.25 1.10" stroke="#1a1a1a" stroke-width="1.15" fill="none"/></svg>
<div class="t" style="left:172.5px;top:248.39px;font-size:6.40px;color:#111;letter-spacing:0.35px;transform:scaleX(0.688);transform-origin:0 0;">Auto Zoom</div>
<svg class="r" style="left:202.5px;top:248.30px;overflow:visible" width="5" height="5" viewBox="0 0 5 5"><rect x="0" y="0" width="5" height="5" fill="#fdfdfd"/><path d="M0.35 5 V0.35 H5" fill="none" stroke="#858585" stroke-width="0.7"/><path d="M4.75 0.5 V4.75 H0.5" fill="none" stroke="#e2e2e2" stroke-width="0.5"/><path d="M1.00 1.90 L2.25 3.40 L4.25 1.10" stroke="#1a1a1a" stroke-width="1.15" fill="none"/></svg>
<div class="t" style="left:210px;top:248.39px;font-size:6.40px;color:#111;letter-spacing:0.35px;transform:scaleX(0.673);transform-origin:0 0;">Highlight</div>
<div class="r" style="left:161.5px;top:255.5px;width:86.5px;height:15px;background:#fafafa;"></div>
<div class="r" style="left:212.2px;top:257.4px;width:33.20000000000002px;height:10.200000000000045px;background:#e4e4e4;border:1px solid #b4b4b4;border-radius:1px;box-sizing:border-box;"></div>
<div class="t" style="left:212.2px;top:259.39px;font-size:6.40px;color:#000;letter-spacing:0.35px;transform:scaleX(0.683);transform-origin:0 0;width:48.61px;text-align:center;">Search Next</div>
<div class="r" style="left:163px;top:272px;width:84px;height:90px;border:1px solid #dadada;box-sizing:border-box;"></div>
<div class="t" style="left:166px;top:268.39px;font-size:6.40px;color:#111;letter-spacing:0.35px;transform:scaleX(0.679);transform-origin:0 0;"><span style="background:#f0f0f0">Property</span></div>
<div class="r" style="left:165px;top:275.5px;width:79px;height:82px;background:#f2f2f2;border:1px solid #e4e4e4;box-sizing:border-box;"></div>
<div class="r" style="left:164.6px;top:365.7px;width:80.1px;height:9.699999999999989px;background:#e4e4e4;border:1px solid #b4b4b4;border-radius:1px;box-sizing:border-box;"></div>
<div class="t" style="left:164.6px;top:367.44px;font-size:6.40px;color:#8a8a8a;letter-spacing:0.35px;transform:scaleX(0.679);transform-origin:0 0;width:117.92px;text-align:center;">Edit Metal Mask</div>
<div class="r" style="left:164.6px;top:378.5px;width:80.1px;height:9.800000000000011px;background:#e4e4e4;border:1px solid #b4b4b4;border-radius:1px;box-sizing:border-box;"></div>
<div class="t" style="left:164.6px;top:380.29px;font-size:6.40px;color:#8a8a8a;letter-spacing:0.35px;transform:scaleX(0.681);transform-origin:0 0;width:117.60px;text-align:center;">Delete Metal Mask</div>
<svg class="r" style="left:167.5px;top:393.50px;overflow:visible" width="5" height="5" viewBox="0 0 5 5"><rect x="0" y="0" width="5" height="5" fill="#fdfdfd"/><path d="M0.35 5 V0.35 H5" fill="none" stroke="#858585" stroke-width="0.7"/><path d="M4.75 0.5 V4.75 H0.5" fill="none" stroke="#e2e2e2" stroke-width="0.5"/></svg>
<div class="t" style="left:175.5px;top:393.49px;font-size:6.40px;color:#111;letter-spacing:0.35px;transform:scaleX(0.670);transform-origin:0 0;">Apply to all of unit boards</div>
<div class="r" style="left:164.6px;top:403.4px;width:80.1px;height:9.800000000000011px;background:#e4e4e4;border:1px solid #b4b4b4;border-radius:1px;box-sizing:border-box;"></div>
<div class="t" style="left:164.6px;top:405.19px;font-size:6.40px;color:#8a8a8a;letter-spacing:0.35px;transform:scaleX(0.669);transform-origin:0 0;width:119.74px;text-align:center;">Fillet View</div>
<div class="r" style="left:164.6px;top:415.4px;width:80.1px;height:10.100000000000023px;background:#e4e4e4;border:1px solid #b4b4b4;border-radius:1px;box-sizing:border-box;"></div>
<div class="t" style="left:164.6px;top:417.34px;font-size:6.40px;color:#8a8a8a;letter-spacing:0.35px;transform:scaleX(0.686);transform-origin:0 0;width:116.80px;text-align:center;">Warpage Modeling</div>
<div class="r" style="left:248px;top:113px;width:3px;height:316px;background:#f0f0f0;"></div>
<div class="r" style="left:251px;top:113px;width:299px;height:316px;background:#000;"></div>
<div class="r" style="left:552px;top:113px;width:108.5px;height:11px;background:#f0f0f0;border:1px solid #dadada;box-sizing:border-box;"></div>
<div class="t" style="left:553.2px;top:115.27px;font-size:6.94px;color:#111;letter-spacing:0.35px;transform:scaleX(0.683);transform-origin:0 0;">Layer Control</div>
<svg class="r" style="left:653px;top:116.5px" width="5" height="5" viewBox="0 0 5 5"><path d="M0.5 0.5 L4.5 4.5 M4.5 0.5 L0.5 4.5" stroke="#999" stroke-width="0.6"/></svg>
<div class="r" style="left:552px;top:124px;width:108.5px;height:305px;border-left:1px solid #e0e0e0;border-right:1px solid #e0e0e0;box-sizing:border-box;"></div>
<div class="r" style="left:555.2px;top:128px;width:101.79999999999995px;height:23px;border:1px solid #d5d5d5;box-sizing:border-box;"></div>
<div class="t" style="left:558.5px;top:124.89px;font-size:6.40px;color:#111;letter-spacing:0.35px;transform:scaleX(0.678);transform-origin:0 0;"><span style="background:#f0f0f0;padding:0 1px">Display Option</span></div>
<svg class="r" style="left:560px;top:133.80px;overflow:visible" width="5" height="5" viewBox="0 0 5 5"><circle cx="2.5" cy="2.5" r="2.15" fill="#fff" stroke="#dedede" stroke-width="0.5"/><path d="M0.98 4.02 A2.15 2.15 0 0 1 4.02 0.98" fill="none" stroke="#808080" stroke-width="0.75"/><circle cx="2.5" cy="2.5" r="1.0" fill="#1a1a1a"/></svg>
<div class="t" style="left:567.5px;top:133.39px;font-size:6.40px;color:#111;letter-spacing:0.35px;transform:scaleX(0.688);transform-origin:0 0;">Normal</div>
<svg class="r" style="left:560px;top:143.00px;overflow:visible" width="5" height="5" viewBox="0 0 5 5"><circle cx="2.5" cy="2.5" r="2.15" fill="#fff" stroke="#dedede" stroke-width="0.5"/><path d="M0.98 4.02 A2.15 2.15 0 0 1 4.02 0.98" fill="none" stroke="#808080" stroke-width="0.75"/></svg>
<div class="t" style="left:568px;top:142.59px;font-size:6.40px;color:#111;letter-spacing:0.35px;transform:scaleX(0.684);transform-origin:0 0;">Translucency Mode</div>
<div class="r" style="left:555.2px;top:155px;width:101.5px;height:208.2px;border:1px solid #d5d5d5;box-sizing:border-box;"></div>
<div class="t" style="left:558px;top:151.89px;font-size:6.40px;color:#111;letter-spacing:0.35px;transform:scaleX(0.683);transform-origin:0 0;"><span style="background:#f0f0f0;padding:0 1px">Layer</span></div>
<div class="t" style="left:562px;top:160.89px;font-size:6.40px;color:#222;letter-spacing:0.35px;transform:scaleX(0.683);transform-origin:0 0;">Layer</div>
<div class="t" style="left:615px;top:162.19px;font-size:6.40px;color:#222;letter-spacing:0.35px;transform:scaleX(0.680);transform-origin:0 0;">Color</div>
<div class="t" style="left:635.3px;top:157.39px;font-size:6.40px;color:#222;letter-spacing:0.35px;transform:scaleX(0.683);transform-origin:0 0;">Layer</div>
<div class="t" style="left:635.1px;top:163.19px;font-size:6.40px;color:#222;letter-spacing:0.35px;transform:scaleX(0.664);transform-origin:0 0;">Priority</div>
<div class="r" style="left:559px;top:172px;width:94px;height:84px;border:1px solid #d5d5d5;box-sizing:border-box;"></div>
<div class="r" style="left:559px;top:263.5px;width:94px;height:84.2px;border:1px solid #d5d5d5;box-sizing:border-box;"></div>
<svg class="r" style="left:563px;top:169.30px;overflow:visible" width="5" height="5" viewBox="0 0 5 5"><rect x="0" y="0" width="5" height="5" fill="#fdfdfd"/><path d="M0.35 5 V0.35 H5" fill="none" stroke="#858585" stroke-width="0.7"/><path d="M4.75 0.5 V4.75 H0.5" fill="none" stroke="#e2e2e2" stroke-width="0.5"/><path d="M1.00 1.90 L2.25 3.40 L4.25 1.10" stroke="#1a1a1a" stroke-width="1.15" fill="none"/></svg>
<div class="t" style="left:570.5px;top:169.09px;font-size:6.40px;color:#111;letter-spacing:0.35px;transform:scaleX(0.688);transform-origin:0 0;"><span style="background:#f0f0f0;padding:0 1px">Top</span></div>
<svg class="r" style="left:563px;top:179.80px;overflow:visible" width="5" height="5" viewBox="0 0 5 5"><rect x="0" y="0" width="5" height="5" fill="#fdfdfd"/><path d="M0.35 5 V0.35 H5" fill="none" stroke="#858585" stroke-width="0.7"/><path d="M4.75 0.5 V4.75 H0.5" fill="none" stroke="#e2e2e2" stroke-width="0.5"/><path d="M1.00 1.90 L2.25 3.40 L4.25 1.10" stroke="#1a1a1a" stroke-width="1.15" fill="none"/></svg>
<div class="t" style="left:570.5px;top:179.09px;font-size:6.23px;color:#111;letter-spacing:0.35px;transform:scaleX(0.685);transform-origin:0 0;">CAD - Pad</div>
<div class="r" style="left:614.8px;top:177.8px;width:15px;height:9.5px;background:#f3f3f3;border:1px solid #dcdcdc;box-sizing:border-box;"></div>
<div class="r" style="left:616.2px;top:179.0px;width:7.8px;height:7px;background:#f6b05c;"></div>
<svg class="r" style="left:625.3px;top:181.10px" width="3" height="2" viewBox="0 0 3 2"><path d="M0 0 L3 0 L1.5 2Z" fill="#222"/></svg>
<div class="r" style="left:635px;top:177.8px;width:15.5px;height:9.5px;background:#fff;border:0.8px solid #8c8c8c;box-sizing:border-box;"></div>
<div class="t" style="left:636.5px;top:179.49px;font-size:6.40px;color:#111;letter-spacing:0.35px;transform:scaleX(0.690);transform-origin:0 0;">1</div>
<div class="r" style="left:644.5px;top:179.3px;width:5px;height:6.5px;background:#fff;"></div>
<svg class="r" style="left:644.8px;top:181.30px" width="4" height="2.5" viewBox="0 0 4 2.5"><path d="M0 0 L4 0 L2 2.5Z" fill="#111"/></svg>
<svg class="r" style="left:563px;top:191.00px;overflow:visible" width="5" height="5" viewBox="0 0 5 5"><rect x="0" y="0" width="5" height="5" fill="#fdfdfd"/><path d="M0.35 5 V0.35 H5" fill="none" stroke="#858585" stroke-width="0.7"/><path d="M4.75 0.5 V4.75 H0.5" fill="none" stroke="#e2e2e2" stroke-width="0.5"/></svg>
<div class="t" style="left:570.5px;top:190.29px;font-size:6.23px;color:#111;letter-spacing:0.35px;transform:scaleX(0.675);transform-origin:0 0;">CAD - Silk</div>
<div class="r" style="left:614.8px;top:189.0px;width:15px;height:9.5px;background:#f3f3f3;border:1px solid #dcdcdc;box-sizing:border-box;"></div>
<div class="r" style="left:616.2px;top:190.2px;width:7.8px;height:7px;background:#fdf0dc;"></div>
<svg class="r" style="left:625.3px;top:192.30px" width="3" height="2" viewBox="0 0 3 2"><path d="M0 0 L3 0 L1.5 2Z" fill="#222"/></svg>
<div class="r" style="left:635px;top:189.0px;width:15.5px;height:9.5px;background:#fff;border:0.8px solid #8c8c8c;box-sizing:border-box;"></div>
<div class="t" style="left:636.5px;top:190.69px;font-size:6.40px;color:#111;letter-spacing:0.35px;transform:scaleX(0.690);transform-origin:0 0;">2</div>
<div class="r" style="left:644.5px;top:190.5px;width:5px;height:6.5px;background:#fff;"></div>
<svg class="r" style="left:644.8px;top:192.50px" width="4" height="2.5" viewBox="0 0 4 2.5"><path d="M0 0 L4 0 L2 2.5Z" fill="#111"/></svg>
<svg class="r" style="left:563px;top:201.90px;overflow:visible" width="5" height="5" viewBox="0 0 5 5"><rect x="0" y="0" width="5" height="5" fill="#fdfdfd"/><path d="M0.35 5 V0.35 H5" fill="none" stroke="#858585" stroke-width="0.7"/><path d="M4.75 0.5 V4.75 H0.5" fill="none" stroke="#e2e2e2" stroke-width="0.5"/><path d="M1.00 1.90 L2.25 3.40 L4.25 1.10" stroke="#1a1a1a" stroke-width="1.15" fill="none"/></svg>
<div class="t" style="left:570.5px;top:201.19px;font-size:6.23px;color:#111;letter-spacing:0.35px;transform:scaleX(0.686);transform-origin:0 0;">CAD - Mask</div>
<div class="r" style="left:614.8px;top:199.9px;width:15px;height:9.5px;background:#f3f3f3;border:1px solid #dcdcdc;box-sizing:border-box;"></div>
<div class="r" style="left:616.2px;top:201.1px;width:7.8px;height:7px;background:#cc8a92;"></div>
<svg class="r" style="left:625.3px;top:203.20px" width="3" height="2" viewBox="0 0 3 2"><path d="M0 0 L3 0 L1.5 2Z" fill="#222"/></svg>
<div class="r" style="left:635px;top:199.9px;width:15.5px;height:9.5px;background:#fff;border:0.8px solid #8c8c8c;box-sizing:border-box;"></div>
<div class="t" style="left:636.5px;top:201.59px;font-size:6.40px;color:#111;letter-spacing:0.35px;transform:scaleX(0.690);transform-origin:0 0;">3</div>
<div class="r" style="left:644.5px;top:201.4px;width:5px;height:6.5px;background:#fff;"></div>
<svg class="r" style="left:644.8px;top:203.40px" width="4" height="2.5" viewBox="0 0 4 2.5"><path d="M0 0 L4 0 L2 2.5Z" fill="#111"/></svg>
<svg class="r" style="left:563px;top:213.00px;overflow:visible" width="5" height="5" viewBox="0 0 5 5"><rect x="0" y="0" width="5" height="5" fill="#fdfdfd"/><path d="M0.35 5 V0.35 H5" fill="none" stroke="#858585" stroke-width="0.7"/><path d="M4.75 0.5 V4.75 H0.5" fill="none" stroke="#e2e2e2" stroke-width="0.5"/><path d="M1.00 1.90 L2.25 3.40 L4.25 1.10" stroke="#1a1a1a" stroke-width="1.15" fill="none"/></svg>
<div class="t" style="left:570.5px;top:212.29px;font-size:6.23px;color:#111;letter-spacing:0.35px;transform:scaleX(0.680);transform-origin:0 0;">Standard - Mask</div>
<div class="r" style="left:614.8px;top:211.0px;width:15px;height:9.5px;background:#f3f3f3;border:1px solid #dcdcdc;box-sizing:border-box;"></div>
<div class="r" style="left:616.2px;top:212.2px;width:7.8px;height:7px;background:#ffff00;"></div>
<svg class="r" style="left:625.3px;top:214.30px" width="3" height="2" viewBox="0 0 3 2"><path d="M0 0 L3 0 L1.5 2Z" fill="#222"/></svg>
<div class="r" style="left:635px;top:211.0px;width:15.5px;height:9.5px;background:#fff;border:0.8px solid #8c8c8c;box-sizing:border-box;"></div>
<div class="t" style="left:636.5px;top:212.69px;font-size:6.40px;color:#111;letter-spacing:0.35px;transform:scaleX(0.690);transform-origin:0 0;">4</div>
<div class="r" style="left:644.5px;top:212.5px;width:5px;height:6.5px;background:#fff;"></div>
<svg class="r" style="left:644.8px;top:214.50px" width="4" height="2.5" viewBox="0 0 4 2.5"><path d="M0 0 L4 0 L2 2.5Z" fill="#111"/></svg>
<svg class="r" style="left:563px;top:224.10px;overflow:visible" width="5" height="5" viewBox="0 0 5 5"><rect x="0" y="0" width="5" height="5" fill="#fdfdfd"/><path d="M0.35 5 V0.35 H5" fill="none" stroke="#c8c8c8" stroke-width="0.7"/><path d="M4.75 0.5 V4.75 H0.5" fill="none" stroke="#e2e2e2" stroke-width="0.5"/></svg>
<div class="t" style="left:570.5px;top:223.39px;font-size:6.23px;color:#8e8e8e;letter-spacing:0.35px;transform:scaleX(0.680);transform-origin:0 0;">Gerber - Mask</div>
<div class="r" style="left:614.8px;top:222.1px;width:15px;height:9.5px;background:#f3f3f3;border:1px solid #dcdcdc;box-sizing:border-box;"></div>
<div class="r" style="left:616.2px;top:223.29999999999998px;width:7.8px;height:7px;background:#b4b4b4;"></div>
<svg class="r" style="left:625.3px;top:225.40px" width="3" height="2" viewBox="0 0 3 2"><path d="M0 0 L3 0 L1.5 2Z" fill="#aaa"/></svg>
<div class="r" style="left:635px;top:222.1px;width:15.5px;height:9.5px;background:#fff;border:0.8px solid #8c8c8c;box-sizing:border-box;"></div>
<div class="t" style="left:636.5px;top:223.79px;font-size:6.40px;color:#111;letter-spacing:0.35px;transform:scaleX(0.690);transform-origin:0 0;">5</div>
<div class="r" style="left:644.5px;top:223.6px;width:5px;height:6.5px;background:#fff;"></div>
<svg class="r" style="left:644.8px;top:225.60px" width="4" height="2.5" viewBox="0 0 4 2.5"><path d="M0 0 L4 0 L2 2.5Z" fill="#111"/></svg>
<svg class="r" style="left:563px;top:235.10px;overflow:visible" width="5" height="5" viewBox="0 0 5 5"><rect x="0" y="0" width="5" height="5" fill="#fdfdfd"/><path d="M0.35 5 V0.35 H5" fill="none" stroke="#858585" stroke-width="0.7"/><path d="M4.75 0.5 V4.75 H0.5" fill="none" stroke="#e2e2e2" stroke-width="0.5"/><path d="M1.00 1.90 L2.25 3.40 L4.25 1.10" stroke="#1a1a1a" stroke-width="1.15" fill="none"/></svg>
<div class="t" style="left:570.5px;top:234.39px;font-size:6.23px;color:#111;letter-spacing:0.35px;transform:scaleX(0.677);transform-origin:0 0;">Solder - Mask</div>
<div class="r" style="left:614.8px;top:233.1px;width:15px;height:9.5px;background:#f3f3f3;border:1px solid #dcdcdc;box-sizing:border-box;"></div>
<div class="r" style="left:616.2px;top:234.29999999999998px;width:7.8px;height:7px;background:#c6f0fa;"></div>
<svg class="r" style="left:625.3px;top:236.40px" width="3" height="2" viewBox="0 0 3 2"><path d="M0 0 L3 0 L1.5 2Z" fill="#222"/></svg>
<div class="r" style="left:635px;top:233.1px;width:15.5px;height:9.5px;background:#fff;border:0.8px solid #8c8c8c;box-sizing:border-box;"></div>
<div class="t" style="left:636.5px;top:234.79px;font-size:6.40px;color:#111;letter-spacing:0.35px;transform:scaleX(0.690);transform-origin:0 0;">6</div>
<div class="r" style="left:644.5px;top:234.6px;width:5px;height:6.5px;background:#fff;"></div>
<svg class="r" style="left:644.8px;top:236.60px" width="4" height="2.5" viewBox="0 0 4 2.5"><path d="M0 0 L4 0 L2 2.5Z" fill="#111"/></svg>
<svg class="r" style="left:563px;top:245.90px;overflow:visible" width="5" height="5" viewBox="0 0 5 5"><rect x="0" y="0" width="5" height="5" fill="#fdfdfd"/><path d="M0.35 5 V0.35 H5" fill="none" stroke="#c8c8c8" stroke-width="0.7"/><path d="M4.75 0.5 V4.75 H0.5" fill="none" stroke="#e2e2e2" stroke-width="0.5"/><path d="M1.00 1.90 L2.25 3.40 L4.25 1.10" stroke="#9a9a9a" stroke-width="1.15" fill="none"/></svg>
<div class="t" style="left:570.5px;top:245.19px;font-size:6.23px;color:#8e8e8e;letter-spacing:0.35px;transform:scaleX(0.693);transform-origin:0 0;">BOM Check</div>
<div class="r" style="left:614.8px;top:243.9px;width:15px;height:9.5px;background:#f3f3f3;border:1px solid #dcdcdc;box-sizing:border-box;"></div>
<div class="r" style="left:616.2px;top:245.1px;width:7.8px;height:7px;background:#b4b4b4;"></div>
<svg class="r" style="left:625.3px;top:247.20px" width="3" height="2" viewBox="0 0 3 2"><path d="M0 0 L3 0 L1.5 2Z" fill="#aaa"/></svg>
<div class="r" style="left:635px;top:243.9px;width:15.5px;height:9.5px;background:#fff;border:0.8px solid #8c8c8c;box-sizing:border-box;"></div>
<div class="t" style="left:636.5px;top:245.59px;font-size:6.40px;color:#111;letter-spacing:0.35px;transform:scaleX(0.690);transform-origin:0 0;">7</div>
<div class="r" style="left:644.5px;top:245.4px;width:5px;height:6.5px;background:#fff;"></div>
<svg class="r" style="left:644.8px;top:247.40px" width="4" height="2.5" viewBox="0 0 4 2.5"><path d="M0 0 L4 0 L2 2.5Z" fill="#111"/></svg>
<svg class="r" style="left:563px;top:260.90px;overflow:visible" width="5" height="5" viewBox="0 0 5 5"><rect x="0" y="0" width="5" height="5" fill="#fdfdfd"/><path d="M0.35 5 V0.35 H5" fill="none" stroke="#858585" stroke-width="0.7"/><path d="M4.75 0.5 V4.75 H0.5" fill="none" stroke="#e2e2e2" stroke-width="0.5"/><path d="M1.00 1.90 L2.25 3.40 L4.25 1.10" stroke="#1a1a1a" stroke-width="1.15" fill="none"/></svg>
<div class="t" style="left:570.5px;top:260.69px;font-size:6.40px;color:#111;letter-spacing:0.35px;transform:scaleX(0.686);transform-origin:0 0;"><span style="background:#f0f0f0;padding:0 1px">Bottom</span></div>
<svg class="r" style="left:563px;top:271.60px;overflow:visible" width="5" height="5" viewBox="0 0 5 5"><rect x="0" y="0" width="5" height="5" fill="#fdfdfd"/><path d="M0.35 5 V0.35 H5" fill="none" stroke="#858585" stroke-width="0.7"/><path d="M4.75 0.5 V4.75 H0.5" fill="none" stroke="#e2e2e2" stroke-width="0.5"/><path d="M1.00 1.90 L2.25 3.40 L4.25 1.10" stroke="#1a1a1a" stroke-width="1.15" fill="none"/></svg>
<div class="t" style="left:570.5px;top:270.89px;font-size:6.23px;color:#111;letter-spacing:0.35px;transform:scaleX(0.685);transform-origin:0 0;">CAD - Pad</div>
<div class="r" style="left:614.8px;top:269.6px;width:15px;height:9.5px;background:#f3f3f3;border:1px solid #dcdcdc;box-sizing:border-box;"></div>
<div class="r" style="left:616.2px;top:270.8px;width:7.8px;height:7px;background:#fbc890;"></div>
<svg class="r" style="left:625.3px;top:272.90px" width="3" height="2" viewBox="0 0 3 2"><path d="M0 0 L3 0 L1.5 2Z" fill="#222"/></svg>
<div class="r" style="left:635px;top:269.6px;width:15.5px;height:9.5px;background:#fff;border:0.8px solid #8c8c8c;box-sizing:border-box;"></div>
<div class="t" style="left:636.5px;top:271.29px;font-size:6.40px;color:#111;letter-spacing:0.35px;transform:scaleX(0.690);transform-origin:0 0;">8</div>
<div class="r" style="left:644.5px;top:271.1px;width:5px;height:6.5px;background:#fff;"></div>
<svg class="r" style="left:644.8px;top:273.10px" width="4" height="2.5" viewBox="0 0 4 2.5"><path d="M0 0 L4 0 L2 2.5Z" fill="#111"/></svg>
<svg class="r" style="left:563px;top:282.60px;overflow:visible" width="5" height="5" viewBox="0 0 5 5"><rect x="0" y="0" width="5" height="5" fill="#fdfdfd"/><path d="M0.35 5 V0.35 H5" fill="none" stroke="#858585" stroke-width="0.7"/><path d="M4.75 0.5 V4.75 H0.5" fill="none" stroke="#e2e2e2" stroke-width="0.5"/></svg>
<div class="t" style="left:570.5px;top:281.89px;font-size:6.23px;color:#111;letter-spacing:0.35px;transform:scaleX(0.675);transform-origin:0 0;">CAD - Silk</div>
<div class="r" style="left:614.8px;top:280.6px;width:15px;height:9.5px;background:#f3f3f3;border:1px solid #dcdcdc;box-sizing:border-box;"></div>
<div class="r" style="left:616.2px;top:281.8px;width:7.8px;height:7px;background:#fdd8d4;"></div>
<svg class="r" style="left:625.3px;top:283.90px" width="3" height="2" viewBox="0 0 3 2"><path d="M0 0 L3 0 L1.5 2Z" fill="#222"/></svg>
<div class="r" style="left:635px;top:280.6px;width:15.5px;height:9.5px;background:#fff;border:0.8px solid #8c8c8c;box-sizing:border-box;"></div>
<div class="t" style="left:636.5px;top:282.29px;font-size:6.40px;color:#111;letter-spacing:0.35px;transform:scaleX(0.690);transform-origin:0 0;">9</div>
<div class="r" style="left:644.5px;top:282.1px;width:5px;height:6.5px;background:#fff;"></div>
<svg class="r" style="left:644.8px;top:284.10px" width="4" height="2.5" viewBox="0 0 4 2.5"><path d="M0 0 L4 0 L2 2.5Z" fill="#111"/></svg>
<svg class="r" style="left:563px;top:293.60px;overflow:visible" width="5" height="5" viewBox="0 0 5 5"><rect x="0" y="0" width="5" height="5" fill="#fdfdfd"/><path d="M0.35 5 V0.35 H5" fill="none" stroke="#858585" stroke-width="0.7"/><path d="M4.75 0.5 V4.75 H0.5" fill="none" stroke="#e2e2e2" stroke-width="0.5"/><path d="M1.00 1.90 L2.25 3.40 L4.25 1.10" stroke="#1a1a1a" stroke-width="1.15" fill="none"/></svg>
<div class="t" style="left:570.5px;top:292.89px;font-size:6.23px;color:#111;letter-spacing:0.35px;transform:scaleX(0.686);transform-origin:0 0;">CAD - Mask</div>
<div class="r" style="left:614.8px;top:291.6px;width:15px;height:9.5px;background:#f3f3f3;border:1px solid #dcdcdc;box-sizing:border-box;"></div>
<div class="r" style="left:616.2px;top:292.8px;width:7.8px;height:7px;background:#b8626e;"></div>
<svg class="r" style="left:625.3px;top:294.90px" width="3" height="2" viewBox="0 0 3 2"><path d="M0 0 L3 0 L1.5 2Z" fill="#222"/></svg>
<div class="r" style="left:635px;top:291.6px;width:15.5px;height:9.5px;background:#fff;border:0.8px solid #8c8c8c;box-sizing:border-box;"></div>
<div class="t" style="left:636.5px;top:293.29px;font-size:6.40px;color:#111;letter-spacing:0.35px;transform:scaleX(0.690);transform-origin:0 0;">10</div>
<div class="r" style="left:644.5px;top:293.1px;width:5px;height:6.5px;background:#fff;"></div>
<svg class="r" style="left:644.8px;top:295.10px" width="4" height="2.5" viewBox="0 0 4 2.5"><path d="M0 0 L4 0 L2 2.5Z" fill="#111"/></svg>
<svg class="r" style="left:563px;top:304.50px;overflow:visible" width="5" height="5" viewBox="0 0 5 5"><rect x="0" y="0" width="5" height="5" fill="#fdfdfd"/><path d="M0.35 5 V0.35 H5" fill="none" stroke="#858585" stroke-width="0.7"/><path d="M4.75 0.5 V4.75 H0.5" fill="none" stroke="#e2e2e2" stroke-width="0.5"/><path d="M1.00 1.90 L2.25 3.40 L4.25 1.10" stroke="#1a1a1a" stroke-width="1.15" fill="none"/></svg>
<div class="t" style="left:570.5px;top:303.79px;font-size:6.23px;color:#111;letter-spacing:0.35px;transform:scaleX(0.680);transform-origin:0 0;">Standard - Mask</div>
<div class="r" style="left:614.8px;top:302.5px;width:15px;height:9.5px;background:#f3f3f3;border:1px solid #dcdcdc;box-sizing:border-box;"></div>
<div class="r" style="left:616.2px;top:303.7px;width:7.8px;height:7px;background:#ff00ff;"></div>
<svg class="r" style="left:625.3px;top:305.80px" width="3" height="2" viewBox="0 0 3 2"><path d="M0 0 L3 0 L1.5 2Z" fill="#222"/></svg>
<div class="r" style="left:635px;top:302.5px;width:15.5px;height:9.5px;background:#fff;border:0.8px solid #8c8c8c;box-sizing:border-box;"></div>
<div class="t" style="left:636.5px;top:304.19px;font-size:6.40px;color:#111;letter-spacing:0.35px;transform:scaleX(0.685);transform-origin:0 0;">11</div>
<div class="r" style="left:644.5px;top:304.0px;width:5px;height:6.5px;background:#fff;"></div>
<svg class="r" style="left:644.8px;top:306.00px" width="4" height="2.5" viewBox="0 0 4 2.5"><path d="M0 0 L4 0 L2 2.5Z" fill="#111"/></svg>
<svg class="r" style="left:563px;top:315.40px;overflow:visible" width="5" height="5" viewBox="0 0 5 5"><rect x="0" y="0" width="5" height="5" fill="#fdfdfd"/><path d="M0.35 5 V0.35 H5" fill="none" stroke="#c8c8c8" stroke-width="0.7"/><path d="M4.75 0.5 V4.75 H0.5" fill="none" stroke="#e2e2e2" stroke-width="0.5"/></svg>
<div class="t" style="left:570.5px;top:314.69px;font-size:6.23px;color:#8e8e8e;letter-spacing:0.35px;transform:scaleX(0.680);transform-origin:0 0;">Gerber - Mask</div>
<div class="r" style="left:614.8px;top:313.4px;width:15px;height:9.5px;background:#f3f3f3;border:1px solid #dcdcdc;box-sizing:border-box;"></div>
<div class="r" style="left:616.2px;top:314.59999999999997px;width:7.8px;height:7px;background:#b4b4b4;"></div>
<svg class="r" style="left:625.3px;top:316.70px" width="3" height="2" viewBox="0 0 3 2"><path d="M0 0 L3 0 L1.5 2Z" fill="#aaa"/></svg>
<div class="r" style="left:635px;top:313.4px;width:15.5px;height:9.5px;background:#fff;border:0.8px solid #8c8c8c;box-sizing:border-box;"></div>
<div class="t" style="left:636.5px;top:315.09px;font-size:6.40px;color:#111;letter-spacing:0.35px;transform:scaleX(0.690);transform-origin:0 0;">12</div>
<div class="r" style="left:644.5px;top:314.9px;width:5px;height:6.5px;background:#fff;"></div>
<svg class="r" style="left:644.8px;top:316.90px" width="4" height="2.5" viewBox="0 0 4 2.5"><path d="M0 0 L4 0 L2 2.5Z" fill="#111"/></svg>
<svg class="r" style="left:563px;top:326.50px;overflow:visible" width="5" height="5" viewBox="0 0 5 5"><rect x="0" y="0" width="5" height="5" fill="#fdfdfd"/><path d="M0.35 5 V0.35 H5" fill="none" stroke="#858585" stroke-width="0.7"/><path d="M4.75 0.5 V4.75 H0.5" fill="none" stroke="#e2e2e2" stroke-width="0.5"/><path d="M1.00 1.90 L2.25 3.40 L4.25 1.10" stroke="#1a1a1a" stroke-width="1.15" fill="none"/></svg>
<div class="t" style="left:570.5px;top:325.79px;font-size:6.23px;color:#111;letter-spacing:0.35px;transform:scaleX(0.677);transform-origin:0 0;">Solder - Mask</div>
<div class="r" style="left:614.8px;top:324.5px;width:15px;height:9.5px;background:#f3f3f3;border:1px solid #dcdcdc;box-sizing:border-box;"></div>
<div class="r" style="left:616.2px;top:325.7px;width:7.8px;height:7px;background:#93b9c0;"></div>
<svg class="r" style="left:625.3px;top:327.80px" width="3" height="2" viewBox="0 0 3 2"><path d="M0 0 L3 0 L1.5 2Z" fill="#222"/></svg>
<div class="r" style="left:635px;top:324.5px;width:15.5px;height:9.5px;background:#fff;border:0.8px solid #8c8c8c;box-sizing:border-box;"></div>
<div class="t" style="left:636.5px;top:326.19px;font-size:6.40px;color:#111;letter-spacing:0.35px;transform:scaleX(0.690);transform-origin:0 0;">13</div>
<div class="r" style="left:644.5px;top:326.0px;width:5px;height:6.5px;background:#fff;"></div>
<svg class="r" style="left:644.8px;top:328.00px" width="4" height="2.5" viewBox="0 0 4 2.5"><path d="M0 0 L4 0 L2 2.5Z" fill="#111"/></svg>
<svg class="r" style="left:563px;top:337.10px;overflow:visible" width="5" height="5" viewBox="0 0 5 5"><rect x="0" y="0" width="5" height="5" fill="#fdfdfd"/><path d="M0.35 5 V0.35 H5" fill="none" stroke="#c8c8c8" stroke-width="0.7"/><path d="M4.75 0.5 V4.75 H0.5" fill="none" stroke="#e2e2e2" stroke-width="0.5"/><path d="M1.00 1.90 L2.25 3.40 L4.25 1.10" stroke="#9a9a9a" stroke-width="1.15" fill="none"/></svg>
<div class="t" style="left:570.5px;top:336.39px;font-size:6.23px;color:#8e8e8e;letter-spacing:0.35px;transform:scaleX(0.693);transform-origin:0 0;">BOM Check</div>
<div class="r" style="left:614.8px;top:335.1px;width:15px;height:9.5px;background:#f3f3f3;border:1px solid #dcdcdc;box-sizing:border-box;"></div>
<div class="r" style="left:616.2px;top:336.3px;width:7.8px;height:7px;background:#b4b4b4;"></div>
<svg class="r" style="left:625.3px;top:338.40px" width="3" height="2" viewBox="0 0 3 2"><path d="M0 0 L3 0 L1.5 2Z" fill="#aaa"/></svg>
<div class="r" style="left:635px;top:335.1px;width:15.5px;height:9.5px;background:#fff;border:0.8px solid #8c8c8c;box-sizing:border-box;"></div>
<div class="t" style="left:636.5px;top:336.79px;font-size:6.40px;color:#111;letter-spacing:0.35px;transform:scaleX(0.690);transform-origin:0 0;">14</div>
<div class="r" style="left:644.5px;top:336.6px;width:5px;height:6.5px;background:#fff;"></div>
<svg class="r" style="left:644.8px;top:338.60px" width="4" height="2.5" viewBox="0 0 4 2.5"><path d="M0 0 L4 0 L2 2.5Z" fill="#111"/></svg>
<svg class="r" style="left:563px;top:353.70px;overflow:visible" width="5" height="5" viewBox="0 0 5 5"><rect x="0" y="0" width="5" height="5" fill="#fdfdfd"/><path d="M0.35 5 V0.35 H5" fill="none" stroke="#858585" stroke-width="0.7"/><path d="M4.75 0.5 V4.75 H0.5" fill="none" stroke="#e2e2e2" stroke-width="0.5"/><path d="M1.00 1.90 L2.25 3.40 L4.25 1.10" stroke="#1a1a1a" stroke-width="1.15" fill="none"/></svg>
<div class="t" style="left:570.5px;top:352.99px;font-size:6.23px;color:#111;letter-spacing:0.35px;transform:scaleX(0.651);transform-origin:0 0;">Drill</div>
<div class="r" style="left:614.8px;top:351.7px;width:15px;height:9.5px;background:#f3f3f3;border:1px solid #dcdcdc;box-sizing:border-box;"></div>
<div class="r" style="left:616.2px;top:352.9px;width:7.8px;height:7px;background:#404040;"></div>
<svg class="r" style="left:625.3px;top:355.00px" width="3" height="2" viewBox="0 0 3 2"><path d="M0 0 L3 0 L1.5 2Z" fill="#222"/></svg>
<div class="r" style="left:635px;top:351.7px;width:15.5px;height:9.5px;background:#fff;border:0.8px solid #8c8c8c;box-sizing:border-box;"></div>
<div class="t" style="left:636.5px;top:353.39px;font-size:6.40px;color:#111;letter-spacing:0.35px;transform:scaleX(0.690);transform-origin:0 0;">15</div>
<div class="r" style="left:644.5px;top:353.2px;width:5px;height:6.5px;background:#fff;"></div>
<svg class="r" style="left:644.8px;top:355.20px" width="4" height="2.5" viewBox="0 0 4 2.5"><path d="M0 0 L4 0 L2 2.5Z" fill="#111"/></svg>
<div class="r" style="left:556px;top:367.8px;width:103px;height:56px;background:#000;"></div>
<svg class="r" style="left:556px;top:367.8px" width="103" height="56" viewBox="556 367.8 103 56">
<line x1="575.2" y1="368" x2="575.2" y2="424" stroke="#8a8a00" stroke-width="1.5"/>
<line x1="639.3" y1="368" x2="639.3" y2="424" stroke="#8a8a00" stroke-width="1.5"/>
<g transform="translate(577.3,379.7) scale(0.2179) translate(-263.8,-198.5)">
<rect x="263.8" y="198.5" width="273.5" height="144.8" fill="none" stroke="#c03030" stroke-width="5"/>
<path d="M277 213 Q277 210.6 279.5 210.6 H339 L348.2 219.6 V236 H386.6 V255.6 L393.1 262.1 V316.2 H379.1 V330.4 H279.5 Q277 330.4 277 328 Z" fill="none" stroke="#c03030" stroke-width="5"/>
<path d="M277 213 Q277 210.6 279.5 210.6 H339 L348.2 219.6 V236 H386.6 V255.6 L393.1 262.1 V316.2 H379.1 V330.4 H279.5 Q277 330.4 277 328 Z" transform="translate(128.3,0)" fill="none" stroke="#c03030" stroke-width="5"/>
</g>
</svg>
<svg class="r" style="left:251px;top:113px" width="299" height="316" viewBox="251 113 299 316">
<line x1="263.8" y1="113" x2="263.8" y2="429" stroke="#b00000" stroke-width="0.9"/>
<line x1="251" y1="343.3" x2="550" y2="343.3" stroke="#b00000" stroke-width="0.9"/>
<rect x="263.8" y="198.5" width="273.5" height="144.8" fill="none" stroke="#b00000" stroke-width="0.9"/>
<rect x="257.1" y="188.05" width="288.2" height="163.4" rx="1" fill="none" stroke="#ff0000" stroke-width="2"/>
<g transform="translate(0,0)">
<path d="M277 213 Q277 210.6 279.5 210.6 H339 L348.2 219.6 V236 H386.6 V255.6 L393.1 262.1 V316.2 H379.1 V330.4 H279.5 Q277 330.4 277 328 Z" fill="none" stroke="#a02424" stroke-width="0.9"/>
<path d="M281.1 217 Q281.1 214.5 283.5 214.5 H338.4 L344.7 221.7 V239.9 H382.4 V258.9 L389.9 264.5 V312.1 H375.6 V326.5 H320.1 A4.9 5.5 0 0 0 310.3 326.5 H283.5 Q281.1 326.5 281.1 324 Z" fill="none" stroke="#a02424" stroke-width="0.9"/>
<line x1="277" y1="316.3" x2="281.1" y2="316.3" stroke="#a02424" stroke-width="0.7"/>
<line x1="277" y1="318.3" x2="281.1" y2="318.3" stroke="#a02424" stroke-width="0.7"/>
<line x1="277" y1="227.5" x2="281.1" y2="227.5" stroke="#a02424" stroke-width="0.7"/>
<line x1="277" y1="229.5" x2="281.1" y2="229.5" stroke="#a02424" stroke-width="0.7"/>
<line x1="344.7" y1="228" x2="348.2" y2="228" stroke="#a02424" stroke-width="0.7"/>
<line x1="344.7" y1="230" x2="348.2" y2="230" stroke="#a02424" stroke-width="0.7"/>
<line x1="382.4" y1="246.5" x2="386.6" y2="246.5" stroke="#a02424" stroke-width="0.7"/>
<line x1="382.4" y1="248.5" x2="386.6" y2="248.5" stroke="#a02424" stroke-width="0.7"/>
<line x1="389.9" y1="291.5" x2="393.1" y2="291.5" stroke="#a02424" stroke-width="0.7"/>
<line x1="389.9" y1="293.5" x2="393.1" y2="293.5" stroke="#a02424" stroke-width="0.7"/>
<line x1="375.6" y1="320.5" x2="379.1" y2="320.5" stroke="#a02424" stroke-width="0.7"/>
<line x1="375.6" y1="322.5" x2="379.1" y2="322.5" stroke="#a02424" stroke-width="0.7"/>
<circle cx="287.7" cy="219.7" r="2" fill="#555"/>
<circle cx="336.7" cy="219.7" r="2" fill="#555"/>
<circle cx="287.8" cy="321.5" r="2" fill="#555"/>
<circle cx="370.5" cy="321.5" r="2" fill="#555"/>
<circle cx="381.8" cy="264.5" r="2" fill="#555"/>
<rect x="293" y="220.5" width="6.8" height="6.5" fill="#f4a860"/>
<rect x="293" y="220.5" width="2.2" height="6.5" fill="#ffe600"/>
<rect x="297.6" y="220.5" width="2.2" height="6.5" fill="#ffe600"/>
<rect x="317.7" y="220.5" width="7.1" height="6.5" fill="#f4a860"/>
<rect x="317.7" y="220.5" width="2.2" height="6.5" fill="#ffe600"/>
<rect x="322.6" y="220.5" width="2.2" height="6.5" fill="#ffe600"/>
<rect x="293" y="229.5" width="7" height="8.1" fill="#f4a860"/>
<rect x="293" y="229.5" width="2.2" height="8.1" fill="#ffe600"/>
<rect x="297.8" y="229.5" width="2.2" height="8.1" fill="#ffe600"/>
<rect x="317.7" y="229.5" width="7.1" height="8.1" fill="#f4a860"/>
<rect x="317.7" y="229.5" width="2.2" height="8.1" fill="#ffe600"/>
<rect x="322.6" y="229.5" width="2.2" height="8.1" fill="#ffe600"/>
<rect x="300.3" y="232" width="17.1" height="8" fill="#ffe600"/>
<rect x="303.5" y="232.5" width="1.6" height="7" fill="#f4a860"/>
<rect x="308.3" y="232.5" width="1.6" height="7" fill="#f4a860"/>
<rect x="313" y="232.5" width="1.6" height="7" fill="#f4a860"/>
<rect x="354.6" y="244" width="3.6" height="14.2" fill="#ffe600"/><rect x="370.8" y="244" width="3.8" height="14.2" fill="#ffe600"/><rect x="360.8" y="252.4" width="7" height="4.2" fill="#ffe600"/>
<rect x="355.1" y="246" width="2.6" height="5.7" fill="#f4a860"/><rect x="371.4" y="246" width="2.6" height="5.7" fill="#f4a860"/>
<rect x="299.00" y="243.8" width="1.2" height="2.6" fill="#e0c800"/>
<rect x="300.90" y="243.8" width="1.2" height="2.6" fill="#e0c800"/>
<rect x="302.80" y="243.8" width="1.2" height="2.6" fill="#e0c800"/>
<rect x="304.70" y="243.8" width="1.2" height="2.6" fill="#e0c800"/>
<rect x="306.60" y="243.8" width="1.2" height="2.6" fill="#e0c800"/>
<rect x="308.50" y="243.8" width="1.2" height="2.6" fill="#e0c800"/>
<rect x="310.40" y="243.8" width="1.2" height="2.6" fill="#e0c800"/>
<rect x="312.30" y="243.8" width="1.2" height="2.6" fill="#e0c800"/>
<rect x="314.20" y="243.8" width="1.2" height="2.6" fill="#e0c800"/>
<rect x="316.10" y="243.8" width="1.2" height="2.6" fill="#e0c800"/>
<rect x="318.00" y="243.8" width="1.2" height="2.6" fill="#e0c800"/>
<rect x="298.50" y="255.8" width="1.1" height="2.8" fill="#d8c000"/>
<rect x="300.30" y="255.8" width="1.1" height="2.8" fill="#d8c000"/>
<rect x="302.10" y="255.8" width="1.1" height="2.8" fill="#d8c000"/>
<rect x="303.90" y="255.8" width="1.1" height="2.8" fill="#d8c000"/>
<rect x="305.70" y="255.8" width="1.1" height="2.8" fill="#d8c000"/>
<rect x="307.50" y="255.8" width="1.1" height="2.8" fill="#d8c000"/>
<rect x="309.30" y="255.8" width="1.1" height="2.8" fill="#d8c000"/>
<rect x="311.10" y="255.8" width="1.1" height="2.8" fill="#d8c000"/>
<rect x="312.90" y="255.8" width="1.1" height="2.8" fill="#d8c000"/>
<rect x="314.70" y="255.8" width="1.1" height="2.8" fill="#d8c000"/>
<rect x="316.50" y="255.8" width="1.1" height="2.8" fill="#d8c000"/>
<rect x="318.30" y="255.8" width="1.1" height="2.8" fill="#d8c000"/>
<rect x="298.5" y="262" width="21" height="2.6" fill="#4a3a1c"/>
<rect x="298.50" y="262" width="1.0" height="2.6" fill="#7a6428"/>
<rect x="300.70" y="262" width="1.0" height="2.6" fill="#7a6428"/>
<rect x="302.90" y="262" width="1.0" height="2.6" fill="#7a6428"/>
<rect x="305.10" y="262" width="1.0" height="2.6" fill="#7a6428"/>
<rect x="307.30" y="262" width="1.0" height="2.6" fill="#7a6428"/>
<rect x="309.50" y="262" width="1.0" height="2.6" fill="#7a6428"/>
<rect x="311.70" y="262" width="1.0" height="2.6" fill="#7a6428"/>
<rect x="313.90" y="262" width="1.0" height="2.6" fill="#7a6428"/>
<rect x="316.10" y="262" width="1.0" height="2.6" fill="#7a6428"/>
<rect x="318.30" y="262" width="1.0" height="2.6" fill="#7a6428"/>
<rect x="298.5" y="270" width="21" height="2.6" fill="#4a3a1c"/>
<rect x="298.50" y="270" width="1.0" height="2.6" fill="#7a6428"/>
<rect x="300.70" y="270" width="1.0" height="2.6" fill="#7a6428"/>
<rect x="302.90" y="270" width="1.0" height="2.6" fill="#7a6428"/>
<rect x="305.10" y="270" width="1.0" height="2.6" fill="#7a6428"/>
<rect x="307.30" y="270" width="1.0" height="2.6" fill="#7a6428"/>
<rect x="309.50" y="270" width="1.0" height="2.6" fill="#7a6428"/>
<rect x="311.70" y="270" width="1.0" height="2.6" fill="#7a6428"/>
<rect x="313.90" y="270" width="1.0" height="2.6" fill="#7a6428"/>
<rect x="316.10" y="270" width="1.0" height="2.6" fill="#7a6428"/>
<rect x="318.30" y="270" width="1.0" height="2.6" fill="#7a6428"/>
<rect x="298.50" y="277.5" width="1.2" height="2.4" fill="#c8b000"/>
<rect x="300.50" y="277.5" width="1.2" height="2.4" fill="#c8b000"/>
<rect x="302.50" y="277.5" width="1.2" height="2.4" fill="#c8b000"/>
<rect x="304.50" y="277.5" width="1.2" height="2.4" fill="#c8b000"/>
<rect x="306.50" y="277.5" width="1.2" height="2.4" fill="#c8b000"/>
<rect x="311.00" y="277.5" width="1.2" height="2.4" fill="#c8b000"/>
<rect x="313.00" y="277.5" width="1.2" height="2.4" fill="#c8b000"/>
<rect x="315.00" y="277.5" width="1.2" height="2.4" fill="#c8b000"/>
<rect x="317.00" y="277.5" width="1.2" height="2.4" fill="#c8b000"/>
<rect x="298.5" y="290.5" width="1.2" height="2.5" fill="#c8b000"/><rect x="301" y="290.5" width="1.2" height="2.5" fill="#c8b000"/><rect x="307" y="291.5" width="10" height="1.2" fill="#c8b000"/><rect x="306.5" y="290" width="1.2" height="1.8" fill="#c8b000"/>
<rect x="294.5" y="297" width="2.6" height="4" fill="#d8c000"/>
<rect x="298.5" y="297.5" width="20.5" height="3.4" fill="#4a3a1c"/>
<rect x="298.50" y="297.5" width="1.0" height="3.4" fill="#7a6428"/>
<rect x="300.70" y="297.5" width="1.0" height="3.4" fill="#7a6428"/>
<rect x="302.90" y="297.5" width="1.0" height="3.4" fill="#7a6428"/>
<rect x="305.10" y="297.5" width="1.0" height="3.4" fill="#7a6428"/>
<rect x="307.30" y="297.5" width="1.0" height="3.4" fill="#7a6428"/>
<rect x="309.50" y="297.5" width="1.0" height="3.4" fill="#7a6428"/>
<rect x="311.70" y="297.5" width="1.0" height="3.4" fill="#7a6428"/>
<rect x="313.90" y="297.5" width="1.0" height="3.4" fill="#7a6428"/>
<rect x="316.10" y="297.5" width="1.0" height="3.4" fill="#7a6428"/>
<rect x="318.30" y="297.5" width="1.0" height="3.4" fill="#7a6428"/>
<rect x="298.5" y="305" width="20.5" height="3.4" fill="#4a3a1c"/>
<rect x="298.50" y="305" width="1.0" height="3.4" fill="#7a6428"/>
<rect x="300.70" y="305" width="1.0" height="3.4" fill="#7a6428"/>
<rect x="302.90" y="305" width="1.0" height="3.4" fill="#7a6428"/>
<rect x="305.10" y="305" width="1.0" height="3.4" fill="#7a6428"/>
<rect x="307.30" y="305" width="1.0" height="3.4" fill="#7a6428"/>
<rect x="309.50" y="305" width="1.0" height="3.4" fill="#7a6428"/>
<rect x="311.70" y="305" width="1.0" height="3.4" fill="#7a6428"/>
<rect x="313.90" y="305" width="1.0" height="3.4" fill="#7a6428"/>
<rect x="316.10" y="305" width="1.0" height="3.4" fill="#7a6428"/>
<rect x="318.30" y="305" width="1.0" height="3.4" fill="#7a6428"/>
<rect x="296.00" y="312.5" width="1.2" height="2.6" fill="#c8b000"/>
<rect x="297.90" y="312.5" width="1.2" height="2.6" fill="#c8b000"/>
<rect x="299.80" y="312.5" width="1.2" height="2.6" fill="#c8b000"/>
<rect x="301.70" y="312.5" width="1.2" height="2.6" fill="#c8b000"/>
<rect x="303.60" y="312.5" width="1.2" height="2.6" fill="#c8b000"/>
<rect x="305.50" y="312.5" width="1.2" height="2.6" fill="#c8b000"/>
<rect x="307.40" y="312.5" width="1.2" height="2.6" fill="#c8b000"/>
<rect x="309.30" y="312.5" width="1.2" height="2.6" fill="#c8b000"/>
<rect x="311.20" y="312.5" width="1.2" height="2.6" fill="#c8b000"/>
<rect x="313.10" y="312.5" width="1.2" height="2.6" fill="#c8b000"/>
<rect x="315.00" y="312.5" width="1.2" height="2.6" fill="#c8b000"/>
<rect x="327" y="232" width="1.6" height="1.5" fill="#e0cc00"/>
<rect x="329.5" y="232" width="1.6" height="1.5" fill="#e0cc00"/>
<rect x="326.5" y="236" width="1.6" height="2" fill="#e0cc00"/>
<rect x="329.5" y="236" width="1.6" height="2" fill="#e0cc00"/>
<rect x="334.5" y="236" width="2" height="2" fill="#e0cc00"/>
<rect x="325.5" y="242" width="1.5" height="2.5" fill="#e0cc00"/>
<rect x="328.5" y="242" width="1.5" height="2.5" fill="#e0cc00"/>
<rect x="333.5" y="242" width="1.5" height="2.5" fill="#e0cc00"/>
<rect x="336" y="242" width="1.5" height="2.5" fill="#e0cc00"/>
<rect x="338.5" y="242" width="1.5" height="2.5" fill="#e0cc00"/>
<rect x="324.3" y="254.8" width="2.6" height="3.4" fill="#e0cc00"/>
<rect x="330" y="253" width="3" height="2.5" fill="#e0cc00"/>
<rect x="334.5" y="252" width="1.5" height="2.5" fill="#e0cc00"/>
<rect x="337" y="252" width="1.5" height="2.5" fill="#e0cc00"/>
<rect x="333" y="237" width="1.5" height="1.5" fill="#e0cc00"/>
<rect x="336.0" y="273.0" width="1.6" height="1.6" fill="#6a5424"/>
<rect x="336.0" y="276.0" width="1.6" height="1.6" fill="#6a5424"/>
<rect x="336.0" y="279.0" width="1.6" height="1.6" fill="#6a5424"/>
<rect x="336.0" y="282.0" width="1.6" height="1.6" fill="#6a5424"/>
<rect x="336.0" y="285.0" width="1.6" height="1.6" fill="#6a5424"/>
<rect x="336.0" y="288.0" width="1.6" height="1.6" fill="#6a5424"/>
<rect x="336.0" y="291.0" width="1.6" height="1.6" fill="#6a5424"/>
<rect x="336.0" y="294.0" width="1.6" height="1.6" fill="#6a5424"/>
<rect x="336.0" y="297.0" width="1.6" height="1.6" fill="#6a5424"/>
<rect x="338.8" y="273.0" width="1.6" height="1.6" fill="#6a5424"/>
<rect x="338.8" y="276.0" width="1.6" height="1.6" fill="#6a5424"/>
<rect x="338.8" y="279.0" width="1.6" height="1.6" fill="#6a5424"/>
<rect x="338.8" y="282.0" width="1.6" height="1.6" fill="#6a5424"/>
<rect x="338.8" y="285.0" width="1.6" height="1.6" fill="#6a5424"/>
<rect x="338.8" y="288.0" width="1.6" height="1.6" fill="#6a5424"/>
<rect x="338.8" y="291.0" width="1.6" height="1.6" fill="#6a5424"/>
<rect x="338.8" y="294.0" width="1.6" height="1.6" fill="#6a5424"/>
<rect x="338.8" y="297.0" width="1.6" height="1.6" fill="#6a5424"/>
<rect x="341.6" y="273.0" width="1.6" height="1.6" fill="#6a5424"/>
<rect x="341.6" y="276.0" width="1.6" height="1.6" fill="#6a5424"/>
<rect x="341.6" y="279.0" width="1.6" height="1.6" fill="#6a5424"/>
<rect x="341.6" y="282.0" width="1.6" height="1.6" fill="#6a5424"/>
<rect x="341.6" y="285.0" width="1.6" height="1.6" fill="#6a5424"/>
<rect x="341.6" y="288.0" width="1.6" height="1.6" fill="#6a5424"/>
<rect x="341.6" y="291.0" width="1.6" height="1.6" fill="#6a5424"/>
<rect x="341.6" y="294.0" width="1.6" height="1.6" fill="#6a5424"/>
<rect x="341.6" y="297.0" width="1.6" height="1.6" fill="#6a5424"/>
<rect x="344.4" y="273.0" width="1.6" height="1.6" fill="#6a5424"/>
<rect x="344.4" y="276.0" width="1.6" height="1.6" fill="#6a5424"/>
<rect x="344.4" y="279.0" width="1.6" height="1.6" fill="#6a5424"/>
<rect x="344.4" y="282.0" width="1.6" height="1.6" fill="#6a5424"/>
<rect x="344.4" y="285.0" width="1.6" height="1.6" fill="#6a5424"/>
<rect x="344.4" y="288.0" width="1.6" height="1.6" fill="#6a5424"/>
<rect x="344.4" y="291.0" width="1.6" height="1.6" fill="#6a5424"/>
<rect x="344.4" y="294.0" width="1.6" height="1.6" fill="#6a5424"/>
<rect x="344.4" y="297.0" width="1.6" height="1.6" fill="#6a5424"/>
<rect x="347.2" y="273.0" width="1.6" height="1.6" fill="#6a5424"/>
<rect x="347.2" y="276.0" width="1.6" height="1.6" fill="#6a5424"/>
<rect x="347.2" y="279.0" width="1.6" height="1.6" fill="#6a5424"/>
<rect x="347.2" y="282.0" width="1.6" height="1.6" fill="#6a5424"/>
<rect x="347.2" y="285.0" width="1.6" height="1.6" fill="#6a5424"/>
<rect x="347.2" y="288.0" width="1.6" height="1.6" fill="#6a5424"/>
<rect x="347.2" y="291.0" width="1.6" height="1.6" fill="#6a5424"/>
<rect x="347.2" y="294.0" width="1.6" height="1.6" fill="#6a5424"/>
<rect x="347.2" y="297.0" width="1.6" height="1.6" fill="#6a5424"/>
<rect x="350.0" y="273.0" width="1.6" height="1.6" fill="#6a5424"/>
<rect x="350.0" y="276.0" width="1.6" height="1.6" fill="#6a5424"/>
<rect x="350.0" y="279.0" width="1.6" height="1.6" fill="#6a5424"/>
<rect x="350.0" y="282.0" width="1.6" height="1.6" fill="#6a5424"/>
<rect x="350.0" y="285.0" width="1.6" height="1.6" fill="#6a5424"/>
<rect x="350.0" y="288.0" width="1.6" height="1.6" fill="#6a5424"/>
<rect x="350.0" y="291.0" width="1.6" height="1.6" fill="#6a5424"/>
<rect x="350.0" y="294.0" width="1.6" height="1.6" fill="#6a5424"/>
<rect x="350.0" y="297.0" width="1.6" height="1.6" fill="#6a5424"/>
<rect x="352.8" y="273.0" width="1.6" height="1.6" fill="#6a5424"/>
<rect x="352.8" y="276.0" width="1.6" height="1.6" fill="#6a5424"/>
<rect x="352.8" y="279.0" width="1.6" height="1.6" fill="#6a5424"/>
<rect x="352.8" y="282.0" width="1.6" height="1.6" fill="#6a5424"/>
<rect x="352.8" y="285.0" width="1.6" height="1.6" fill="#6a5424"/>
<rect x="352.8" y="288.0" width="1.6" height="1.6" fill="#6a5424"/>
<rect x="352.8" y="291.0" width="1.6" height="1.6" fill="#6a5424"/>
<rect x="352.8" y="294.0" width="1.6" height="1.6" fill="#6a5424"/>
<rect x="352.8" y="297.0" width="1.6" height="1.6" fill="#6a5424"/>
<rect x="355.6" y="273.0" width="1.6" height="1.6" fill="#6a5424"/>
<rect x="355.6" y="276.0" width="1.6" height="1.6" fill="#6a5424"/>
<rect x="355.6" y="279.0" width="1.6" height="1.6" fill="#6a5424"/>
<rect x="355.6" y="282.0" width="1.6" height="1.6" fill="#6a5424"/>
<rect x="355.6" y="285.0" width="1.6" height="1.6" fill="#6a5424"/>
<rect x="355.6" y="288.0" width="1.6" height="1.6" fill="#6a5424"/>
<rect x="355.6" y="291.0" width="1.6" height="1.6" fill="#6a5424"/>
<rect x="355.6" y="294.0" width="1.6" height="1.6" fill="#6a5424"/>
<rect x="355.6" y="297.0" width="1.6" height="1.6" fill="#6a5424"/>
<rect x="358.4" y="273.0" width="1.6" height="1.6" fill="#6a5424"/>
<rect x="358.4" y="276.0" width="1.6" height="1.6" fill="#6a5424"/>
<rect x="358.4" y="279.0" width="1.6" height="1.6" fill="#6a5424"/>
<rect x="358.4" y="282.0" width="1.6" height="1.6" fill="#6a5424"/>
<rect x="358.4" y="285.0" width="1.6" height="1.6" fill="#6a5424"/>
<rect x="358.4" y="288.0" width="1.6" height="1.6" fill="#6a5424"/>
<rect x="358.4" y="291.0" width="1.6" height="1.6" fill="#6a5424"/>
<rect x="358.4" y="294.0" width="1.6" height="1.6" fill="#6a5424"/>
<rect x="358.4" y="297.0" width="1.6" height="1.6" fill="#6a5424"/>
<rect x="361.2" y="273.0" width="1.6" height="1.6" fill="#6a5424"/>
<rect x="361.2" y="276.0" width="1.6" height="1.6" fill="#6a5424"/>
<rect x="361.2" y="279.0" width="1.6" height="1.6" fill="#6a5424"/>
<rect x="361.2" y="282.0" width="1.6" height="1.6" fill="#6a5424"/>
<rect x="361.2" y="285.0" width="1.6" height="1.6" fill="#6a5424"/>
<rect x="361.2" y="288.0" width="1.6" height="1.6" fill="#6a5424"/>
<rect x="361.2" y="291.0" width="1.6" height="1.6" fill="#6a5424"/>
<rect x="361.2" y="294.0" width="1.6" height="1.6" fill="#6a5424"/>
<rect x="361.2" y="297.0" width="1.6" height="1.6" fill="#6a5424"/>
<rect x="335" y="265.5" width="3" height="2.2" fill="#dc50e0"/>
<rect x="339" y="265.5" width="2.5" height="2.2" fill="#dc50e0"/>
<rect x="343" y="266" width="6" height="1.8" fill="#dc50e0"/>
<rect x="351" y="266" width="3" height="2" fill="#dc50e0"/>
<rect x="356" y="265.5" width="8" height="2.2" fill="#dc50e0"/>
<rect x="366" y="265" width="3" height="3" fill="#dc50e0"/>
<rect x="335" y="269" width="2" height="6" fill="#dc50e0"/>
<rect x="338.5" y="270" width="2" height="7" fill="#dc50e0"/>
<rect x="342" y="270" width="1.5" height="5" fill="#dc50e0"/>
<rect x="346" y="271" width="2.5" height="2.5" fill="#dc50e0"/>
<rect x="349" y="270" width="3" height="2" fill="#dc50e0"/>
<rect x="354" y="271" width="2" height="2" fill="#dc50e0"/>
<rect x="359" y="270" width="2.2" height="3" fill="#dc50e0"/>
<rect x="336" y="280" width="2" height="3" fill="#dc50e0"/>
<rect x="340" y="281" width="2.5" height="2.5" fill="#dc50e0"/>
<rect x="344" y="279" width="1.5" height="6" fill="#dc50e0"/>
<rect x="348" y="283" width="2.5" height="2" fill="#dc50e0"/>
<rect x="353" y="282" width="2" height="3" fill="#dc50e0"/>
<rect x="357" y="278" width="2" height="2" fill="#dc50e0"/>
<rect x="341" y="286" width="2" height="2" fill="#dc50e0"/>
<rect x="345" y="288" width="3" height="2" fill="#dc50e0"/>
<rect x="350" y="289" width="2" height="2.5" fill="#dc50e0"/>
<rect x="338" y="291" width="2" height="2" fill="#dc50e0"/>
<rect x="328" y="291" width="3" height="3" fill="#dc50e0"/>
<rect x="331" y="293" width="3" height="2.5" fill="#dc50e0"/>
<rect x="327" y="296" width="2.5" height="3" fill="#dc50e0"/>
<rect x="331" y="297" width="3" height="3" fill="#dc50e0"/>
<rect x="335" y="295" width="2.5" height="2.5" fill="#dc50e0"/>
<rect x="329" y="301" width="3" height="2.5" fill="#dc50e0"/>
<rect x="334" y="300" width="2.5" height="3" fill="#dc50e0"/>
<rect x="338" y="299" width="2" height="2" fill="#dc50e0"/>
<rect x="331" y="311" width="9" height="2.5" fill="#dc50e0"/>
<rect x="342" y="311" width="2" height="2.5" fill="#dc50e0"/>
<rect x="356" y="303" width="2" height="3" fill="#dc50e0"/>
<rect x="352" y="297" width="2" height="2.5" fill="#dc50e0"/>
<rect x="360" y="290" width="2" height="2" fill="#dc50e0"/>
<rect x="366" y="261" width="5" height="2.2" fill="#e8d000"/>
<rect x="373" y="261" width="4" height="2.2" fill="#e8d000"/>
<rect x="364" y="270" width="3" height="3" fill="#e8d000"/>
<rect x="368" y="269" width="5" height="3" fill="#e8d000"/>
<rect x="375" y="271" width="3" height="2.5" fill="#e8d000"/>
<rect x="365" y="275" width="4" height="2" fill="#e8d000"/>
<rect x="371" y="276" width="6" height="2.5" fill="#e8d000"/>
<rect x="364" y="281" width="8" height="2.5" fill="#e8d000"/>
<rect x="374" y="281" width="5" height="2.5" fill="#e8d000"/>
<rect x="366" y="286" width="3" height="3" fill="#e8d000"/>
<rect x="373" y="287" width="2.5" height="3" fill="#e8d000"/>
<rect x="378" y="285" width="3" height="4" fill="#e8d000"/>
<rect x="365" y="292" width="4" height="2.5" fill="#e8d000"/>
<rect x="371" y="292" width="2" height="2.5" fill="#e8d000"/>
<rect x="376" y="292" width="2" height="2.5" fill="#e8d000"/>
<rect x="366" y="297" width="2" height="2.5" fill="#e8d000"/>
<rect x="370" y="298" width="2" height="2.5" fill="#e8d000"/>
<rect x="365" y="305.5" width="13" height="2.5" fill="#e8d000"/>
<rect x="357" y="306" width="2" height="2.5" fill="#e8d000"/>
<rect x="350" y="301" width="2" height="2" fill="#e8d000"/>
<rect x="320" y="300" width="2" height="2" fill="#e8d000"/>
<rect x="326" y="283" width="1.6" height="3" fill="#e8d000"/>
<rect x="322" y="309" width="2" height="3" fill="#e8d000"/>
<rect x="340" y="306" width="2" height="2" fill="#e8d000"/>
<rect x="360" y="314" width="1.2" height="1.2" fill="#e8d000"/>
<rect x="347" y="304" width="1.6" height="3" fill="#e8d000"/>
<rect x="329" y="306" width="3" height="2" fill="#e8d000"/>
<rect x="318" y="293" width="2" height="1.5" fill="#e8d000"/>
<rect x="377" y="277" width="3" height="2.5" fill="#e8d000"/>
</g>
<g transform="translate(128.3,0)">
<path d="M277 213 Q277 210.6 279.5 210.6 H339 L348.2 219.6 V236 H386.6 V255.6 L393.1 262.1 V316.2 H379.1 V330.4 H279.5 Q277 330.4 277 328 Z" fill="none" stroke="#a02424" stroke-width="0.9"/>
<path d="M281.1 217 Q281.1 214.5 283.5 214.5 H338.4 L344.7 221.7 V239.9 H382.4 V258.9 L389.9 264.5 V312.1 H375.6 V326.5 H320.1 A4.9 5.5 0 0 0 310.3 326.5 H283.5 Q281.1 326.5 281.1 324 Z" fill="none" stroke="#a02424" stroke-width="0.9"/>
<line x1="277" y1="316.3" x2="281.1" y2="316.3" stroke="#a02424" stroke-width="0.7"/>
<line x1="277" y1="318.3" x2="281.1" y2="318.3" stroke="#a02424" stroke-width="0.7"/>
<line x1="277" y1="227.5" x2="281.1" y2="227.5" stroke="#a02424" stroke-width="0.7"/>
<line x1="277" y1="229.5" x2="281.1" y2="229.5" stroke="#a02424" stroke-width="0.7"/>
<line x1="344.7" y1="228" x2="348.2" y2="228" stroke="#a02424" stroke-width="0.7"/>
<line x1="344.7" y1="230" x2="348.2" y2="230" stroke="#a02424" stroke-width="0.7"/>
<line x1="382.4" y1="246.5" x2="386.6" y2="246.5" stroke="#a02424" stroke-width="0.7"/>
<line x1="382.4" y1="248.5" x2="386.6" y2="248.5" stroke="#a02424" stroke-width="0.7"/>
<line x1="389.9" y1="291.5" x2="393.1" y2="291.5" stroke="#a02424" stroke-width="0.7"/>
<line x1="389.9" y1="293.5" x2="393.1" y2="293.5" stroke="#a02424" stroke-width="0.7"/>
<line x1="375.6" y1="320.5" x2="379.1" y2="320.5" stroke="#a02424" stroke-width="0.7"/>
<line x1="375.6" y1="322.5" x2="379.1" y2="322.5" stroke="#a02424" stroke-width="0.7"/>
<circle cx="287.7" cy="219.7" r="2" fill="#555"/>
<circle cx="336.7" cy="219.7" r="2" fill="#555"/>
<circle cx="287.8" cy="321.5" r="2" fill="#555"/>
<circle cx="370.5" cy="321.5" r="2" fill="#555"/>
<circle cx="381.8" cy="264.5" r="2" fill="#555"/>
<rect x="293" y="220.5" width="6.8" height="6.5" fill="#f4a860"/>
<rect x="293" y="220.5" width="2.2" height="6.5" fill="#ffe600"/>
<rect x="297.6" y="220.5" width="2.2" height="6.5" fill="#ffe600"/>
<rect x="317.7" y="220.5" width="7.1" height="6.5" fill="#f4a860"/>
<rect x="317.7" y="220.5" width="2.2" height="6.5" fill="#ffe600"/>
<rect x="322.6" y="220.5" width="2.2" height="6.5" fill="#ffe600"/>
<rect x="293" y="229.5" width="7" height="8.1" fill="#f4a860"/>
<rect x="293" y="229.5" width="2.2" height="8.1" fill="#ffe600"/>
<rect x="297.8" y="229.5" width="2.2" height="8.1" fill="#ffe600"/>
<rect x="317.7" y="229.5" width="7.1" height="8.1" fill="#f4a860"/>
<rect x="317.7" y="229.5" width="2.2" height="8.1" fill="#ffe600"/>
<rect x="322.6" y="229.5" width="2.2" height="8.1" fill="#ffe600"/>
<rect x="300.3" y="232" width="17.1" height="8" fill="#ffe600"/>
<rect x="303.5" y="232.5" width="1.6" height="7" fill="#f4a860"/>
<rect x="308.3" y="232.5" width="1.6" height="7" fill="#f4a860"/>
<rect x="313" y="232.5" width="1.6" height="7" fill="#f4a860"/>
<rect x="354.6" y="244" width="3.6" height="14.2" fill="#ffe600"/><rect x="370.8" y="244" width="3.8" height="14.2" fill="#ffe600"/><rect x="360.8" y="252.4" width="7" height="4.2" fill="#ffe600"/>
<rect x="355.1" y="246" width="2.6" height="5.7" fill="#f4a860"/><rect x="371.4" y="246" width="2.6" height="5.7" fill="#f4a860"/>
<rect x="299.00" y="243.8" width="1.2" height="2.6" fill="#e0c800"/>
<rect x="300.90" y="243.8" width="1.2" height="2.6" fill="#e0c800"/>
<rect x="302.80" y="243.8" width="1.2" height="2.6" fill="#e0c800"/>
<rect x="304.70" y="243.8" width="1.2" height="2.6" fill="#e0c800"/>
<rect x="306.60" y="243.8" width="1.2" height="2.6" fill="#e0c800"/>
<rect x="308.50" y="243.8" width="1.2" height="2.6" fill="#e0c800"/>
<rect x="310.40" y="243.8" width="1.2" height="2.6" fill="#e0c800"/>
<rect x="312.30" y="243.8" width="1.2" height="2.6" fill="#e0c800"/>
<rect x="314.20" y="243.8" width="1.2" height="2.6" fill="#e0c800"/>
<rect x="316.10" y="243.8" width="1.2" height="2.6" fill="#e0c800"/>
<rect x="318.00" y="243.8" width="1.2" height="2.6" fill="#e0c800"/>
<rect x="298.50" y="255.8" width="1.1" height="2.8" fill="#d8c000"/>
<rect x="300.30" y="255.8" width="1.1" height="2.8" fill="#d8c000"/>
<rect x="302.10" y="255.8" width="1.1" height="2.8" fill="#d8c000"/>
<rect x="303.90" y="255.8" width="1.1" height="2.8" fill="#d8c000"/>
<rect x="305.70" y="255.8" width="1.1" height="2.8" fill="#d8c000"/>
<rect x="307.50" y="255.8" width="1.1" height="2.8" fill="#d8c000"/>
<rect x="309.30" y="255.8" width="1.1" height="2.8" fill="#d8c000"/>
<rect x="311.10" y="255.8" width="1.1" height="2.8" fill="#d8c000"/>
<rect x="312.90" y="255.8" width="1.1" height="2.8" fill="#d8c000"/>
<rect x="314.70" y="255.8" width="1.1" height="2.8" fill="#d8c000"/>
<rect x="316.50" y="255.8" width="1.1" height="2.8" fill="#d8c000"/>
<rect x="318.30" y="255.8" width="1.1" height="2.8" fill="#d8c000"/>
<rect x="298.5" y="262" width="21" height="2.6" fill="#4a3a1c"/>
<rect x="298.50" y="262" width="1.0" height="2.6" fill="#7a6428"/>
<rect x="300.70" y="262" width="1.0" height="2.6" fill="#7a6428"/>
<rect x="302.90" y="262" width="1.0" height="2.6" fill="#7a6428"/>
<rect x="305.10" y="262" width="1.0" height="2.6" fill="#7a6428"/>
<rect x="307.30" y="262" width="1.0" height="2.6" fill="#7a6428"/>
<rect x="309.50" y="262" width="1.0" height="2.6" fill="#7a6428"/>
<rect x="311.70" y="262" width="1.0" height="2.6" fill="#7a6428"/>
<rect x="313.90" y="262" width="1.0" height="2.6" fill="#7a6428"/>
<rect x="316.10" y="262" width="1.0" height="2.6" fill="#7a6428"/>
<rect x="318.30" y="262" width="1.0" height="2.6" fill="#7a6428"/>
<rect x="298.5" y="270" width="21" height="2.6" fill="#4a3a1c"/>
<rect x="298.50" y="270" width="1.0" height="2.6" fill="#7a6428"/>
<rect x="300.70" y="270" width="1.0" height="2.6" fill="#7a6428"/>
<rect x="302.90" y="270" width="1.0" height="2.6" fill="#7a6428"/>
<rect x="305.10" y="270" width="1.0" height="2.6" fill="#7a6428"/>
<rect x="307.30" y="270" width="1.0" height="2.6" fill="#7a6428"/>
<rect x="309.50" y="270" width="1.0" height="2.6" fill="#7a6428"/>
<rect x="311.70" y="270" width="1.0" height="2.6" fill="#7a6428"/>
<rect x="313.90" y="270" width="1.0" height="2.6" fill="#7a6428"/>
<rect x="316.10" y="270" width="1.0" height="2.6" fill="#7a6428"/>
<rect x="318.30" y="270" width="1.0" height="2.6" fill="#7a6428"/>
<rect x="298.50" y="277.5" width="1.2" height="2.4" fill="#c8b000"/>
<rect x="300.50" y="277.5" width="1.2" height="2.4" fill="#c8b000"/>
<rect x="302.50" y="277.5" width="1.2" height="2.4" fill="#c8b000"/>
<rect x="304.50" y="277.5" width="1.2" height="2.4" fill="#c8b000"/>
<rect x="306.50" y="277.5" width="1.2" height="2.4" fill="#c8b000"/>
<rect x="311.00" y="277.5" width="1.2" height="2.4" fill="#c8b000"/>
<rect x="313.00" y="277.5" width="1.2" height="2.4" fill="#c8b000"/>
<rect x="315.00" y="277.5" width="1.2" height="2.4" fill="#c8b000"/>
<rect x="317.00" y="277.5" width="1.2" height="2.4" fill="#c8b000"/>
<rect x="298.5" y="290.5" width="1.2" height="2.5" fill="#c8b000"/><rect x="301" y="290.5" width="1.2" height="2.5" fill="#c8b000"/><rect x="307" y="291.5" width="10" height="1.2" fill="#c8b000"/><rect x="306.5" y="290" width="1.2" height="1.8" fill="#c8b000"/>
<rect x="294.5" y="297" width="2.6" height="4" fill="#d8c000"/>
<rect x="298.5" y="297.5" width="20.5" height="3.4" fill="#4a3a1c"/>
<rect x="298.50" y="297.5" width="1.0" height="3.4" fill="#7a6428"/>
<rect x="300.70" y="297.5" width="1.0" height="3.4" fill="#7a6428"/>
<rect x="302.90" y="297.5" width="1.0" height="3.4" fill="#7a6428"/>
<rect x="305.10" y="297.5" width="1.0" height="3.4" fill="#7a6428"/>
<rect x="307.30" y="297.5" width="1.0" height="3.4" fill="#7a6428"/>
<rect x="309.50" y="297.5" width="1.0" height="3.4" fill="#7a6428"/>
<rect x="311.70" y="297.5" width="1.0" height="3.4" fill="#7a6428"/>
<rect x="313.90" y="297.5" width="1.0" height="3.4" fill="#7a6428"/>
<rect x="316.10" y="297.5" width="1.0" height="3.4" fill="#7a6428"/>
<rect x="318.30" y="297.5" width="1.0" height="3.4" fill="#7a6428"/>
<rect x="298.5" y="305" width="20.5" height="3.4" fill="#4a3a1c"/>
<rect x="298.50" y="305" width="1.0" height="3.4" fill="#7a6428"/>
<rect x="300.70" y="305" width="1.0" height="3.4" fill="#7a6428"/>
<rect x="302.90" y="305" width="1.0" height="3.4" fill="#7a6428"/>
<rect x="305.10" y="305" width="1.0" height="3.4" fill="#7a6428"/>
<rect x="307.30" y="305" width="1.0" height="3.4" fill="#7a6428"/>
<rect x="309.50" y="305" width="1.0" height="3.4" fill="#7a6428"/>
<rect x="311.70" y="305" width="1.0" height="3.4" fill="#7a6428"/>
<rect x="313.90" y="305" width="1.0" height="3.4" fill="#7a6428"/>
<rect x="316.10" y="305" width="1.0" height="3.4" fill="#7a6428"/>
<rect x="318.30" y="305" width="1.0" height="3.4" fill="#7a6428"/>
<rect x="296.00" y="312.5" width="1.2" height="2.6" fill="#c8b000"/>
<rect x="297.90" y="312.5" width="1.2" height="2.6" fill="#c8b000"/>
<rect x="299.80" y="312.5" width="1.2" height="2.6" fill="#c8b000"/>
<rect x="301.70" y="312.5" width="1.2" height="2.6" fill="#c8b000"/>
<rect x="303.60" y="312.5" width="1.2" height="2.6" fill="#c8b000"/>
<rect x="305.50" y="312.5" width="1.2" height="2.6" fill="#c8b000"/>
<rect x="307.40" y="312.5" width="1.2" height="2.6" fill="#c8b000"/>
<rect x="309.30" y="312.5" width="1.2" height="2.6" fill="#c8b000"/>
<rect x="311.20" y="312.5" width="1.2" height="2.6" fill="#c8b000"/>
<rect x="313.10" y="312.5" width="1.2" height="2.6" fill="#c8b000"/>
<rect x="315.00" y="312.5" width="1.2" height="2.6" fill="#c8b000"/>
<rect x="327" y="232" width="1.6" height="1.5" fill="#e0cc00"/>
<rect x="329.5" y="232" width="1.6" height="1.5" fill="#e0cc00"/>
<rect x="326.5" y="236" width="1.6" height="2" fill="#e0cc00"/>
<rect x="329.5" y="236" width="1.6" height="2" fill="#e0cc00"/>
<rect x="334.5" y="236" width="2" height="2" fill="#e0cc00"/>
<rect x="325.5" y="242" width="1.5" height="2.5" fill="#e0cc00"/>
<rect x="328.5" y="242" width="1.5" height="2.5" fill="#e0cc00"/>
<rect x="333.5" y="242" width="1.5" height="2.5" fill="#e0cc00"/>
<rect x="336" y="242" width="1.5" height="2.5" fill="#e0cc00"/>
<rect x="338.5" y="242" width="1.5" height="2.5" fill="#e0cc00"/>
<rect x="324.3" y="254.8" width="2.6" height="3.4" fill="#e0cc00"/>
<rect x="330" y="253" width="3" height="2.5" fill="#e0cc00"/>
<rect x="334.5" y="252" width="1.5" height="2.5" fill="#e0cc00"/>
<rect x="337" y="252" width="1.5" height="2.5" fill="#e0cc00"/>
<rect x="333" y="237" width="1.5" height="1.5" fill="#e0cc00"/>
<rect x="336.0" y="273.0" width="1.6" height="1.6" fill="#6a5424"/>
<rect x="336.0" y="276.0" width="1.6" height="1.6" fill="#6a5424"/>
<rect x="336.0" y="279.0" width="1.6" height="1.6" fill="#6a5424"/>
<rect x="336.0" y="282.0" width="1.6" height="1.6" fill="#6a5424"/>
<rect x="336.0" y="285.0" width="1.6" height="1.6" fill="#6a5424"/>
<rect x="336.0" y="288.0" width="1.6" height="1.6" fill="#6a5424"/>
<rect x="336.0" y="291.0" width="1.6" height="1.6" fill="#6a5424"/>
<rect x="336.0" y="294.0" width="1.6" height="1.6" fill="#6a5424"/>
<rect x="336.0" y="297.0" width="1.6" height="1.6" fill="#6a5424"/>
<rect x="338.8" y="273.0" width="1.6" height="1.6" fill="#6a5424"/>
<rect x="338.8" y="276.0" width="1.6" height="1.6" fill="#6a5424"/>
<rect x="338.8" y="279.0" width="1.6" height="1.6" fill="#6a5424"/>
<rect x="338.8" y="282.0" width="1.6" height="1.6" fill="#6a5424"/>
<rect x="338.8" y="285.0" width="1.6" height="1.6" fill="#6a5424"/>
<rect x="338.8" y="288.0" width="1.6" height="1.6" fill="#6a5424"/>
<rect x="338.8" y="291.0" width="1.6" height="1.6" fill="#6a5424"/>
<rect x="338.8" y="294.0" width="1.6" height="1.6" fill="#6a5424"/>
<rect x="338.8" y="297.0" width="1.6" height="1.6" fill="#6a5424"/>
<rect x="341.6" y="273.0" width="1.6" height="1.6" fill="#6a5424"/>
<rect x="341.6" y="276.0" width="1.6" height="1.6" fill="#6a5424"/>
<rect x="341.6" y="279.0" width="1.6" height="1.6" fill="#6a5424"/>
<rect x="341.6" y="282.0" width="1.6" height="1.6" fill="#6a5424"/>
<rect x="341.6" y="285.0" width="1.6" height="1.6" fill="#6a5424"/>
<rect x="341.6" y="288.0" width="1.6" height="1.6" fill="#6a5424"/>
<rect x="341.6" y="291.0" width="1.6" height="1.6" fill="#6a5424"/>
<rect x="341.6" y="294.0" width="1.6" height="1.6" fill="#6a5424"/>
<rect x="341.6" y="297.0" width="1.6" height="1.6" fill="#6a5424"/>
<rect x="344.4" y="273.0" width="1.6" height="1.6" fill="#6a5424"/>
<rect x="344.4" y="276.0" width="1.6" height="1.6" fill="#6a5424"/>
<rect x="344.4" y="279.0" width="1.6" height="1.6" fill="#6a5424"/>
<rect x="344.4" y="282.0" width="1.6" height="1.6" fill="#6a5424"/>
<rect x="344.4" y="285.0" width="1.6" height="1.6" fill="#6a5424"/>
<rect x="344.4" y="288.0" width="1.6" height="1.6" fill="#6a5424"/>
<rect x="344.4" y="291.0" width="1.6" height="1.6" fill="#6a5424"/>
<rect x="344.4" y="294.0" width="1.6" height="1.6" fill="#6a5424"/>
<rect x="344.4" y="297.0" width="1.6" height="1.6" fill="#6a5424"/>
<rect x="347.2" y="273.0" width="1.6" height="1.6" fill="#6a5424"/>
<rect x="347.2" y="276.0" width="1.6" height="1.6" fill="#6a5424"/>
<rect x="347.2" y="279.0" width="1.6" height="1.6" fill="#6a5424"/>
<rect x="347.2" y="282.0" width="1.6" height="1.6" fill="#6a5424"/>
<rect x="347.2" y="285.0" width="1.6" height="1.6" fill="#6a5424"/>
<rect x="347.2" y="288.0" width="1.6" height="1.6" fill="#6a5424"/>
<rect x="347.2" y="291.0" width="1.6" height="1.6" fill="#6a5424"/>
<rect x="347.2" y="294.0" width="1.6" height="1.6" fill="#6a5424"/>
<rect x="347.2" y="297.0" width="1.6" height="1.6" fill="#6a5424"/>
<rect x="350.0" y="273.0" width="1.6" height="1.6" fill="#6a5424"/>
<rect x="350.0" y="276.0" width="1.6" height="1.6" fill="#6a5424"/>
<rect x="350.0" y="279.0" width="1.6" height="1.6" fill="#6a5424"/>
<rect x="350.0" y="282.0" width="1.6" height="1.6" fill="#6a5424"/>
<rect x="350.0" y="285.0" width="1.6" height="1.6" fill="#6a5424"/>
<rect x="350.0" y="288.0" width="1.6" height="1.6" fill="#6a5424"/>
<rect x="350.0" y="291.0" width="1.6" height="1.6" fill="#6a5424"/>
<rect x="350.0" y="294.0" width="1.6" height="1.6" fill="#6a5424"/>
<rect x="350.0" y="297.0" width="1.6" height="1.6" fill="#6a5424"/>
<rect x="352.8" y="273.0" width="1.6" height="1.6" fill="#6a5424"/>
<rect x="352.8" y="276.0" width="1.6" height="1.6" fill="#6a5424"/>
<rect x="352.8" y="279.0" width="1.6" height="1.6" fill="#6a5424"/>
<rect x="352.8" y="282.0" width="1.6" height="1.6" fill="#6a5424"/>
<rect x="352.8" y="285.0" width="1.6" height="1.6" fill="#6a5424"/>
<rect x="352.8" y="288.0" width="1.6" height="1.6" fill="#6a5424"/>
<rect x="352.8" y="291.0" width="1.6" height="1.6" fill="#6a5424"/>
<rect x="352.8" y="294.0" width="1.6" height="1.6" fill="#6a5424"/>
<rect x="352.8" y="297.0" width="1.6" height="1.6" fill="#6a5424"/>
<rect x="355.6" y="273.0" width="1.6" height="1.6" fill="#6a5424"/>
<rect x="355.6" y="276.0" width="1.6" height="1.6" fill="#6a5424"/>
<rect x="355.6" y="279.0" width="1.6" height="1.6" fill="#6a5424"/>
<rect x="355.6" y="282.0" width="1.6" height="1.6" fill="#6a5424"/>
<rect x="355.6" y="285.0" width="1.6" height="1.6" fill="#6a5424"/>
<rect x="355.6" y="288.0" width="1.6" height="1.6" fill="#6a5424"/>
<rect x="355.6" y="291.0" width="1.6" height="1.6" fill="#6a5424"/>
<rect x="355.6" y="294.0" width="1.6" height="1.6" fill="#6a5424"/>
<rect x="355.6" y="297.0" width="1.6" height="1.6" fill="#6a5424"/>
<rect x="358.4" y="273.0" width="1.6" height="1.6" fill="#6a5424"/>
<rect x="358.4" y="276.0" width="1.6" height="1.6" fill="#6a5424"/>
<rect x="358.4" y="279.0" width="1.6" height="1.6" fill="#6a5424"/>
<rect x="358.4" y="282.0" width="1.6" height="1.6" fill="#6a5424"/>
<rect x="358.4" y="285.0" width="1.6" height="1.6" fill="#6a5424"/>
<rect x="358.4" y="288.0" width="1.6" height="1.6" fill="#6a5424"/>
<rect x="358.4" y="291.0" width="1.6" height="1.6" fill="#6a5424"/>
<rect x="358.4" y="294.0" width="1.6" height="1.6" fill="#6a5424"/>
<rect x="358.4" y="297.0" width="1.6" height="1.6" fill="#6a5424"/>
<rect x="361.2" y="273.0" width="1.6" height="1.6" fill="#6a5424"/>
<rect x="361.2" y="276.0" width="1.6" height="1.6" fill="#6a5424"/>
<rect x="361.2" y="279.0" width="1.6" height="1.6" fill="#6a5424"/>
<rect x="361.2" y="282.0" width="1.6" height="1.6" fill="#6a5424"/>
<rect x="361.2" y="285.0" width="1.6" height="1.6" fill="#6a5424"/>
<rect x="361.2" y="288.0" width="1.6" height="1.6" fill="#6a5424"/>
<rect x="361.2" y="291.0" width="1.6" height="1.6" fill="#6a5424"/>
<rect x="361.2" y="294.0" width="1.6" height="1.6" fill="#6a5424"/>
<rect x="361.2" y="297.0" width="1.6" height="1.6" fill="#6a5424"/>
<rect x="335" y="265.5" width="3" height="2.2" fill="#dc50e0"/>
<rect x="339" y="265.5" width="2.5" height="2.2" fill="#dc50e0"/>
<rect x="343" y="266" width="6" height="1.8" fill="#dc50e0"/>
<rect x="351" y="266" width="3" height="2" fill="#dc50e0"/>
<rect x="356" y="265.5" width="8" height="2.2" fill="#dc50e0"/>
<rect x="366" y="265" width="3" height="3" fill="#dc50e0"/>
<rect x="335" y="269" width="2" height="6" fill="#dc50e0"/>
<rect x="338.5" y="270" width="2" height="7" fill="#dc50e0"/>
<rect x="342" y="270" width="1.5" height="5" fill="#dc50e0"/>
<rect x="346" y="271" width="2.5" height="2.5" fill="#dc50e0"/>
<rect x="349" y="270" width="3" height="2" fill="#dc50e0"/>
<rect x="354" y="271" width="2" height="2" fill="#dc50e0"/>
<rect x="359" y="270" width="2.2" height="3" fill="#dc50e0"/>
<rect x="336" y="280" width="2" height="3" fill="#dc50e0"/>
<rect x="340" y="281" width="2.5" height="2.5" fill="#dc50e0"/>
<rect x="344" y="279" width="1.5" height="6" fill="#dc50e0"/>
<rect x="348" y="283" width="2.5" height="2" fill="#dc50e0"/>
<rect x="353" y="282" width="2" height="3" fill="#dc50e0"/>
<rect x="357" y="278" width="2" height="2" fill="#dc50e0"/>
<rect x="341" y="286" width="2" height="2" fill="#dc50e0"/>
<rect x="345" y="288" width="3" height="2" fill="#dc50e0"/>
<rect x="350" y="289" width="2" height="2.5" fill="#dc50e0"/>
<rect x="338" y="291" width="2" height="2" fill="#dc50e0"/>
<rect x="328" y="291" width="3" height="3" fill="#dc50e0"/>
<rect x="331" y="293" width="3" height="2.5" fill="#dc50e0"/>
<rect x="327" y="296" width="2.5" height="3" fill="#dc50e0"/>
<rect x="331" y="297" width="3" height="3" fill="#dc50e0"/>
<rect x="335" y="295" width="2.5" height="2.5" fill="#dc50e0"/>
<rect x="329" y="301" width="3" height="2.5" fill="#dc50e0"/>
<rect x="334" y="300" width="2.5" height="3" fill="#dc50e0"/>
<rect x="338" y="299" width="2" height="2" fill="#dc50e0"/>
<rect x="331" y="311" width="9" height="2.5" fill="#dc50e0"/>
<rect x="342" y="311" width="2" height="2.5" fill="#dc50e0"/>
<rect x="356" y="303" width="2" height="3" fill="#dc50e0"/>
<rect x="352" y="297" width="2" height="2.5" fill="#dc50e0"/>
<rect x="360" y="290" width="2" height="2" fill="#dc50e0"/>
<rect x="366" y="261" width="5" height="2.2" fill="#e8d000"/>
<rect x="373" y="261" width="4" height="2.2" fill="#e8d000"/>
<rect x="364" y="270" width="3" height="3" fill="#e8d000"/>
<rect x="368" y="269" width="5" height="3" fill="#e8d000"/>
<rect x="375" y="271" width="3" height="2.5" fill="#e8d000"/>
<rect x="365" y="275" width="4" height="2" fill="#e8d000"/>
<rect x="371" y="276" width="6" height="2.5" fill="#e8d000"/>
<rect x="364" y="281" width="8" height="2.5" fill="#e8d000"/>
<rect x="374" y="281" width="5" height="2.5" fill="#e8d000"/>
<rect x="366" y="286" width="3" height="3" fill="#e8d000"/>
<rect x="373" y="287" width="2.5" height="3" fill="#e8d000"/>
<rect x="378" y="285" width="3" height="4" fill="#e8d000"/>
<rect x="365" y="292" width="4" height="2.5" fill="#e8d000"/>
<rect x="371" y="292" width="2" height="2.5" fill="#e8d000"/>
<rect x="376" y="292" width="2" height="2.5" fill="#e8d000"/>
<rect x="366" y="297" width="2" height="2.5" fill="#e8d000"/>
<rect x="370" y="298" width="2" height="2.5" fill="#e8d000"/>
<rect x="365" y="305.5" width="13" height="2.5" fill="#e8d000"/>
<rect x="357" y="306" width="2" height="2.5" fill="#e8d000"/>
<rect x="350" y="301" width="2" height="2" fill="#e8d000"/>
<rect x="320" y="300" width="2" height="2" fill="#e8d000"/>
<rect x="326" y="283" width="1.6" height="3" fill="#e8d000"/>
<rect x="322" y="309" width="2" height="3" fill="#e8d000"/>
<rect x="340" y="306" width="2" height="2" fill="#e8d000"/>
<rect x="360" y="314" width="1.2" height="1.2" fill="#e8d000"/>
<rect x="347" y="304" width="1.6" height="3" fill="#e8d000"/>
<rect x="329" y="306" width="3" height="2" fill="#e8d000"/>
<rect x="318" y="293" width="2" height="1.5" fill="#e8d000"/>
<rect x="377" y="277" width="3" height="2.5" fill="#e8d000"/>
</g>
</svg>
<div class="r" style="left:251px;top:428px;width:411px;height:1px;background:#9c9c9c;"></div>
<div class="r" style="left:53.1px;top:192px;width:2px;height:78.5px;background:#ff0000;border-bottom-left-radius:1px;"></div>
<div class="r" style="left:53.1px;top:268.6px;width:203px;height:2px;background:#ff0000;border-bottom-left-radius:1px;"></div>
<svg class="r" style="left:248px;top:264px" width="10" height="12" viewBox="248 264 10 12"><path d="M249.6 266.4 L256.4 269.6 L249.6 273.1" stroke="#ff0000" stroke-width="1.8" fill="none"/></svg>
</body></html>
